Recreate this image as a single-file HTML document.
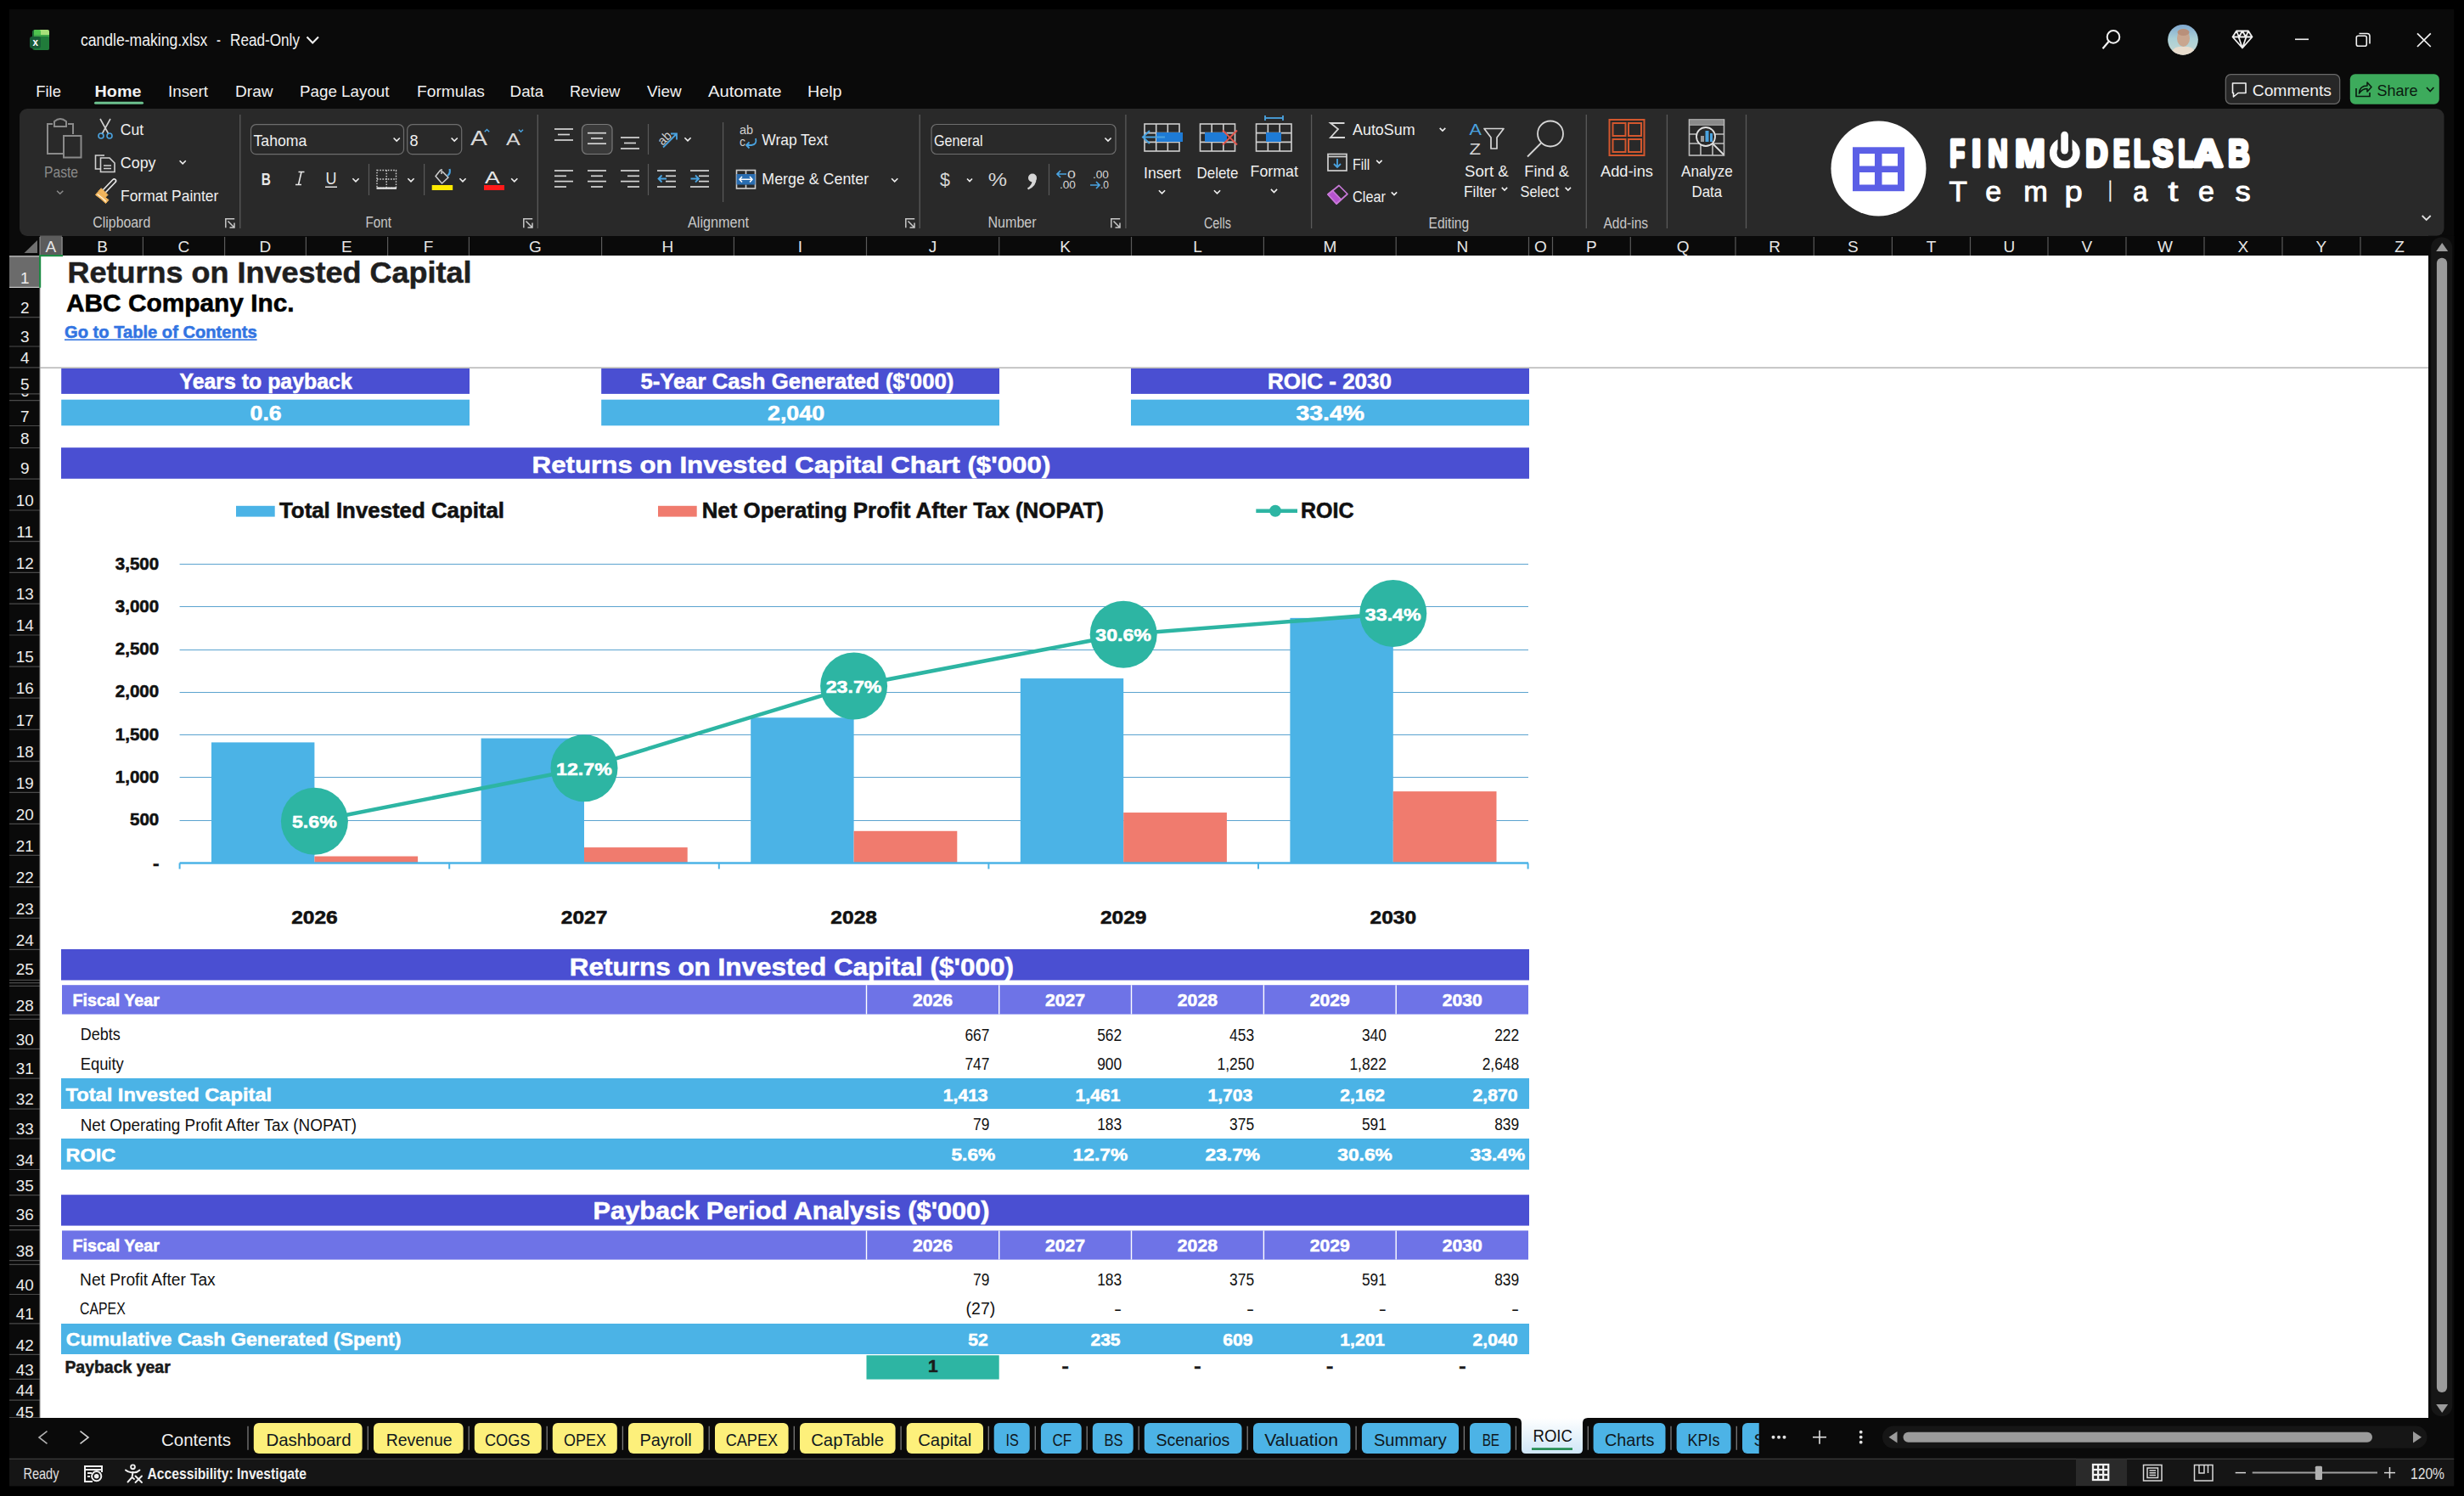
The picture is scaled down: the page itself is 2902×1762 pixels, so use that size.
<!DOCTYPE html>
<html><head><meta charset="utf-8"><title>candle-making.xlsx</title>
<style>
html,body{margin:0;padding:0;background:#000;overflow:hidden;}
svg{display:block;}
text{font-family:"Liberation Sans",sans-serif;white-space:pre;}
</style></head><body>
<svg width="2902" height="1762" viewBox="0 0 2902 1762">
<rect x="0.00" y="0.00" width="2902.00" height="1762.00" fill="#000" />
<rect x="11.00" y="11.00" width="2879.20" height="1739.30" fill="#0a0a0a" />
<rect x="38.00" y="35.00" width="20.00" height="24.00" fill="#1d6f36" rx="3" />
<rect x="40.00" y="35.00" width="18.00" height="9.00" fill="#a8e07a" rx="2" />
<rect x="40.00" y="35.00" width="8.00" height="9.00" fill="#4fc34f" rx="2" />
<rect x="40.00" y="41.00" width="18.00" height="3.00" fill="#3fa74a" />
<rect x="40.00" y="43.00" width="18.00" height="16.00" fill="#207b3a" rx="2" />
<rect x="35.00" y="43.00" width="13.00" height="14.00" fill="#185c37" rx="3" />
<text transform="translate(38.50 54.00) scale(0.8966 1)" x="0" y="0" font-size="13" font-weight="bold" fill="#fff" >x</text>
<text x="95.00" y="54.00" font-size="19.5" font-weight="normal" fill="#f2f2f2" textLength="149.35" lengthAdjust="spacingAndGlyphs" >candle-making.xlsx</text>
<text transform="translate(255.00 54.00) scale(0.7692 1)" x="0" y="0" font-size="19.5" font-weight="normal" fill="#f2f2f2" >-</text>
<text x="271.10" y="54.00" font-size="19.5" font-weight="normal" fill="#f2f2f2" textLength="81.86" lengthAdjust="spacingAndGlyphs" >Read-Only</text>
<path d="M361.5 43.5 L368.2 50.5 L375 43.5" stroke="#f2f2f2" fill="none" stroke-width="2" />
<circle cx="2489" cy="43.4" r="7.3" stroke="#f2f2f2" stroke-width="2" fill="none"/>
<line x1="2483.50" y1="49.00" x2="2476.50" y2="57.20" stroke="#f2f2f2" stroke-width="2.2" />
<defs><clipPath id="av"><circle cx="2571" cy="46.8" r="17.9"/></clipPath><linearGradient id="sky" x1="0" y1="0" x2="0" y2="1"><stop offset="0" stop-color="#7ea6cf"/><stop offset="0.45" stop-color="#a9cfd6"/><stop offset="1" stop-color="#c8d8d2"/></linearGradient></defs>
<g clip-path="url(#av)"><rect x="2552" y="28" width="38" height="38" fill="url(#sky)"/><ellipse cx="2571.5" cy="45" rx="7.5" ry="10" fill="#c9a68f"/><ellipse cx="2571.5" cy="38" rx="7" ry="4" fill="#b9907a"/><path d="M2556 66 Q2558 56 2566 55 L2577 55 Q2585 56 2587 66 Z" fill="#e8dccd"/></g>
<path d="M2634 36.5 L2648 36.5 L2652.5 43.5 L2641 56.5 L2629.5 43.5 Z M2629.5 43.5 L2652.5 43.5 M2636.5 43.5 L2641 56.5 L2645.5 43.5 M2634 36.5 L2637 43.5 L2641 36.5 L2645 43.5 L2648 36.5" stroke="#f2f2f2" fill="none" stroke-width="1.8" stroke-linejoin="round"/>
<line x1="2703.00" y1="46.30" x2="2719.00" y2="46.30" stroke="#f2f2f2" stroke-width="1.6" />
<rect x="2775.3" y="42.3" width="12" height="12" rx="2" fill="none" stroke="#f2f2f2" stroke-width="1.6"/>
<path d="M2778.5 39.5 L2788 39.5 Q2791 39.5 2791 42.5 L2791 51.5" stroke="#f2f2f2" fill="none" stroke-width="1.6" />
<line x1="2847.00" y1="39.30" x2="2862.80" y2="55.00" stroke="#f2f2f2" stroke-width="1.7" />
<line x1="2862.80" y1="39.30" x2="2847.00" y2="55.00" stroke="#f2f2f2" stroke-width="1.7" />
<rect x="2621.3" y="87.7" width="134.4" height="34.6" rx="6" fill="#272727" stroke="#6a6a6a" stroke-width="1.2"/>
<path d="M2629.5 98 L2645 98 L2645 109.5 L2636 109.5 L2630.5 114 L2630.5 109.5 L2629.5 109.5 Z" stroke="#f2f2f2" fill="none" stroke-width="1.6" stroke-linejoin="round"/>
<text x="2652.70" y="113.10" font-size="19" font-weight="normal" fill="#f2f2f2" textLength="93.31" lengthAdjust="spacingAndGlyphs" >Comments</text>
<rect x="2767.8" y="87.3" width="105" height="35.5" rx="6" fill="#3dab5c"/>
<path d="M2775 104 L2775 113.5 L2791 113.5 L2791 109" stroke="#0b1a10" fill="none" stroke-width="1.6" />
<path d="M2778.5 110 Q2779 101 2788 101 L2788 97 L2793 102.5 L2788 108 L2788 104.5 Q2782 104.5 2778.5 110 Z" stroke="#0b1a10" fill="none" stroke-width="1.5" stroke-linejoin="round"/>
<text x="2799.40" y="113.10" font-size="19" font-weight="normal" fill="#0b1a10" textLength="48.15" lengthAdjust="spacingAndGlyphs" >Share</text>
<path d="M2858 103 L2862.2 107.5 L2866.4 103" stroke="#0b1a10" fill="none" stroke-width="1.7" />
<text x="42.20" y="113.80" font-size="19" font-weight="normal" fill="#f2f2f2" textLength="29.71" lengthAdjust="spacingAndGlyphs" >File</text>
<text x="111.60" y="113.80" font-size="19" font-weight="bold" fill="#f2f2f2" textLength="54.84" lengthAdjust="spacingAndGlyphs" >Home</text>
<text x="198.00" y="113.80" font-size="19" font-weight="normal" fill="#f2f2f2" textLength="47.02" lengthAdjust="spacingAndGlyphs" >Insert</text>
<text x="277.00" y="113.80" font-size="19" font-weight="normal" fill="#f2f2f2" textLength="44.64" lengthAdjust="spacingAndGlyphs" >Draw</text>
<text x="353.00" y="113.80" font-size="19" font-weight="normal" fill="#f2f2f2" textLength="105.54" lengthAdjust="spacingAndGlyphs" >Page Layout</text>
<text x="491.00" y="113.80" font-size="19" font-weight="normal" fill="#f2f2f2" textLength="79.93" lengthAdjust="spacingAndGlyphs" >Formulas</text>
<text x="600.60" y="113.80" font-size="19" font-weight="normal" fill="#f2f2f2" textLength="39.68" lengthAdjust="spacingAndGlyphs" >Data</text>
<text x="670.90" y="113.80" font-size="19" font-weight="normal" fill="#f2f2f2" textLength="59.41" lengthAdjust="spacingAndGlyphs" >Review</text>
<text x="762.00" y="113.80" font-size="19" font-weight="normal" fill="#f2f2f2" textLength="40.64" lengthAdjust="spacingAndGlyphs" >View</text>
<text x="834.00" y="113.80" font-size="19" font-weight="normal" fill="#f2f2f2" textLength="86.57" lengthAdjust="spacingAndGlyphs" >Automate</text>
<text x="951.00" y="113.80" font-size="19" font-weight="normal" fill="#f2f2f2" textLength="40.58" lengthAdjust="spacingAndGlyphs" >Help</text>
<rect x="111.00" y="119.80" width="58.00" height="3.00" fill="#6cc18e" rx="1.5" />
<rect x="23.00" y="128.00" width="2855.50" height="150.00" fill="#292929" rx="9" />
<line x1="282.80" y1="135.00" x2="282.80" y2="269.00" stroke="#5a5a5a" stroke-width="1.3" />
<line x1="633.30" y1="135.00" x2="633.30" y2="269.00" stroke="#5a5a5a" stroke-width="1.3" />
<line x1="1083.20" y1="135.00" x2="1083.20" y2="269.00" stroke="#5a5a5a" stroke-width="1.3" />
<line x1="1325.90" y1="135.00" x2="1325.90" y2="269.00" stroke="#5a5a5a" stroke-width="1.3" />
<line x1="1544.60" y1="135.00" x2="1544.60" y2="269.00" stroke="#5a5a5a" stroke-width="1.3" />
<line x1="1868.30" y1="135.00" x2="1868.30" y2="269.00" stroke="#5a5a5a" stroke-width="1.3" />
<line x1="1963.40" y1="135.00" x2="1963.40" y2="269.00" stroke="#5a5a5a" stroke-width="1.3" />
<line x1="2056.50" y1="135.00" x2="2056.50" y2="269.00" stroke="#5a5a5a" stroke-width="1.3" />
<g fill="none" stroke="#8a8a8a" stroke-width="2"><path d="M62 146 L56 146 L56 181 L74 181"/><path d="M80 146 L86 146 L86 158"/><path d="M64 149 L64 143 Q71 137 78 143 L78 149 Z"/><rect x="75" y="160" width="20.5" height="25.5"/></g>
<text x="52.00" y="209.30" font-size="19" font-weight="normal" fill="#8a8a8a" textLength="40.07" lengthAdjust="spacingAndGlyphs" >Paste</text>
<path d="M67.10000000000001 224.7 L70.7 228.3 L74.3 224.7" stroke="#8a8a8a" fill="none" stroke-width="1.5" />
<g fill="none" stroke-width="1.6"><path d="M118 140 L128 158 M130 140 L120 158" stroke="#d0d0d0"/><circle cx="119" cy="160" r="3" stroke="#4aa3e0"/><circle cx="129" cy="160" r="3" stroke="#4aa3e0"/></g>
<text x="141.80" y="158.60" font-size="19" font-weight="normal" fill="#f0f0f0" textLength="27.36" lengthAdjust="spacingAndGlyphs" >Cut</text>
<g fill="none" stroke="#d0d0d0" stroke-width="1.6"><path d="M119 183 L112.5 183 L112.5 199 L118 199"/><path d="M119 183 L123 183"/><path d="M118.5 186 L129 186 L135 192 L135 202.5 L118.5 202.5 Z"/><path d="M122 195 L131 195 M122 198.5 L131 198.5"/></g>
<text x="141.80" y="198.10" font-size="19" font-weight="normal" fill="#f0f0f0" textLength="41.70" lengthAdjust="spacingAndGlyphs" >Copy</text>
<path d="M211.6 189.2 L215.2 192.8 L218.79999999999998 189.2" stroke="#f0f0f0" fill="none" stroke-width="1.6" />
<g stroke-linejoin="round" stroke-linecap="round"><path d="M124.5 226.5 L135.5 215 Q137.5 213 136 211.5 Q134.5 210 132.5 212 L121.5 223.5" fill="none" stroke="#e6e6e6" stroke-width="1.7"/><path d="M119.5 222 L127 229.5 L124 232.5 L116.5 225 Z" fill="#f3b65c" stroke="#f3b65c" stroke-width="1"/><path d="M116.5 225 Q113.5 228 112.5 229.5 Q119 234 124.5 239.5 Q126 238 128 235.5 L124 232.5 Z" fill="#f3b65c" stroke="#f3b65c" stroke-width="1"/><path d="M115 229 Q120 232.5 124.5 237" fill="none" stroke="#fff3dc" stroke-width="1.3"/></g>
<text x="142.00" y="237.30" font-size="19" font-weight="normal" fill="#f0f0f0" textLength="115.31" lengthAdjust="spacingAndGlyphs" >Format Painter</text>
<text x="109.30" y="267.70" font-size="17.5" font-weight="normal" fill="#c8c8c8" textLength="67.92" lengthAdjust="spacingAndGlyphs" >Clipboard</text>
<path d="M265 257 L265 269 L277 269 M265 257 L277 257 L277 269" stroke="#c8c8c8" fill="none" stroke-width="0" />
<path d="M265.8 268.2 L265.8 257.8 L276.2 257.8" stroke="#c8c8c8" stroke-width="1.5" fill="none"/>
<path d="M268.5 260.5 L276 268 M270.5 268 L276 268 L276 262.5" stroke="#c8c8c8" stroke-width="1.5" fill="none"/>
<rect x="295.5" y="146.7" width="180" height="35" rx="6" fill="#292929" stroke="#6e6e6e" stroke-width="1.2"/>
<text x="298.50" y="171.50" font-size="19" font-weight="normal" fill="#f0f0f0" textLength="62.85" lengthAdjust="spacingAndGlyphs" >Tahoma</text>
<path d="M463.59999999999997 162.5 L467.2 166.10000000000002 L470.8 162.5" stroke="#f0f0f0" fill="none" stroke-width="1.6" />
<rect x="479.7" y="146.7" width="64" height="35" rx="6" fill="#292929" stroke="#6e6e6e" stroke-width="1.2"/>
<text transform="translate(482.50 171.50) scale(0.9524 1)" x="0" y="0" font-size="19" font-weight="normal" fill="#f0f0f0" >8</text>
<path d="M531.6 162.5 L535.2 166.10000000000002 L538.8000000000001 162.5" stroke="#f0f0f0" fill="none" stroke-width="1.6" />
<text transform="translate(554.00 171.00) scale(1.2500 1)" x="0" y="0" font-size="24" font-weight="normal" fill="#d8d8d8" >A</text>
<path d="M570.8 155.2 L573.5 152.5 L576.2 155.2" stroke="#4aa3e0" fill="none" stroke-width="1.5" />
<text transform="translate(596.00 171.00) scale(1.2593 1)" x="0" y="0" font-size="20" font-weight="normal" fill="#d8d8d8" >A</text>
<path d="M611.0 152.75 L613.5 155.25 L616.0 152.75" stroke="#4aa3e0" fill="none" stroke-width="1.5" />
<text transform="translate(307.80 217.80) scale(0.7724 1)" x="0" y="0" font-size="20" font-weight="bold" fill="#e6e6e6" >B</text>
<path d="M348 217.5 L355 217.5 M351.5 202.5 L358.5 202.5 M355 202.5 L351.5 217.5" stroke="#e6e6e6" fill="none" stroke-width="1.6" />
<text transform="translate(383.50 216.50) scale(0.8966 1)" x="0" y="0" font-size="20" font-weight="normal" fill="#e6e6e6" >U</text>
<rect x="383.00" y="219.50" width="14.00" height="1.50" fill="#e6e6e6" />
<path d="M415.4 210.2 L419 213.8 L422.6 210.2" stroke="#f0f0f0" fill="none" stroke-width="1.6" />
<line x1="434.50" y1="193.00" x2="434.50" y2="230.00" stroke="#5a5a5a" stroke-width="1.2" />
<g fill="none" stroke="#d0d0d0" stroke-width="1.4" stroke-dasharray="1.6 1.6"><rect x="444" y="200.5" width="22.5" height="21"/><path d="M455.2 200.5 L455.2 221.5 M444 211 L466.5 211"/></g>
<rect x="443.50" y="220.50" width="23.50" height="2.30" fill="#e6e6e6" />
<path d="M480.4 210.2 L484 213.8 L487.6 210.2" stroke="#f0f0f0" fill="none" stroke-width="1.6" />
<line x1="499.60" y1="193.00" x2="499.60" y2="230.00" stroke="#5a5a5a" stroke-width="1.2" />
<g fill="none" stroke="#d0d0d0" stroke-width="1.5" stroke-linejoin="round"><path d="M519 200 L513 207.5 L520.5 216 L528 209 L521 202"/><path d="M520 199 L520 205"/></g>
<path d="M527 207 Q531 204 529.5 199" stroke="#4aa3e0" fill="none" stroke-width="2.2" />
<rect x="508.70" y="218.00" width="24.50" height="6.00" fill="#ffea00" />
<path d="M541.4 210.2 L545 213.8 L548.6 210.2" stroke="#f0f0f0" fill="none" stroke-width="1.6" />
<text transform="translate(571.00 216.00) scale(1.3333 1)" x="0" y="0" font-size="20" font-weight="normal" fill="#e6e6e6" >A</text>
<rect x="570.00" y="218.00" width="24.00" height="6.00" fill="#ff1a1a" />
<path d="M602.1999999999999 210.2 L605.8 213.8 L609.4 210.2" stroke="#f0f0f0" fill="none" stroke-width="1.6" />
<text x="430.50" y="267.50" font-size="17.5" font-weight="normal" fill="#c8c8c8" textLength="30.52" lengthAdjust="spacingAndGlyphs" >Font</text>
<path d="M616 257 L616 269 L628 269 M616 257 L628 257 L628 269" stroke="#c8c8c8" fill="none" stroke-width="0" />
<path d="M616.8 268.2 L616.8 257.8 L627.2 257.8" stroke="#c8c8c8" stroke-width="1.5" fill="none"/>
<path d="M619.5 260.5 L627 268 M621.5 268 L627 268 L627 262.5" stroke="#c8c8c8" stroke-width="1.5" fill="none"/>
<line x1="653.00" y1="152.00" x2="675.00" y2="152.00" stroke="#d6d6d6" stroke-width="1.7" />
<line x1="657.00" y1="158.50" x2="671.00" y2="158.50" stroke="#d6d6d6" stroke-width="1.7" />
<line x1="653.00" y1="165.00" x2="675.00" y2="165.00" stroke="#d6d6d6" stroke-width="1.7" />
<rect x="685.5" y="146.5" width="35.5" height="35" rx="6" fill="#3a3a3a" stroke="#7a7a7a" stroke-width="1.2"/>
<line x1="692.00" y1="156.70" x2="714.00" y2="156.70" stroke="#d6d6d6" stroke-width="1.7" />
<line x1="696.00" y1="162.90" x2="710.00" y2="162.90" stroke="#d6d6d6" stroke-width="1.7" />
<line x1="692.00" y1="169.20" x2="714.00" y2="169.20" stroke="#d6d6d6" stroke-width="1.7" />
<line x1="731.00" y1="162.00" x2="753.00" y2="162.00" stroke="#d6d6d6" stroke-width="1.7" />
<line x1="735.00" y1="168.50" x2="749.00" y2="168.50" stroke="#d6d6d6" stroke-width="1.7" />
<line x1="731.00" y1="175.00" x2="753.00" y2="175.00" stroke="#d6d6d6" stroke-width="1.7" />
<line x1="763.50" y1="146.00" x2="763.50" y2="182.00" stroke="#5a5a5a" stroke-width="1.2" />
<line x1="851.60" y1="144.00" x2="851.60" y2="238.00" stroke="#5a5a5a" stroke-width="1.2" />
<text x="774.00" y="168.00" font-size="15" font-weight="normal" fill="#d0d0d0" textLength="15.94" lengthAdjust="spacingAndGlyphs" transform="rotate(-45 782 162)">ab</text>
<path d="M781 173.5 L797 157.5 M790 157.5 L797 157.5 L797 164.5" stroke="#4aa3e0" fill="none" stroke-width="1.8" />
<path d="M806.4 162.2 L810 165.8 L813.6 162.2" stroke="#f0f0f0" fill="none" stroke-width="1.6" />
<line x1="653.00" y1="201.00" x2="675.00" y2="201.00" stroke="#d6d6d6" stroke-width="1.7" />
<line x1="653.00" y1="207.30" x2="667.00" y2="207.30" stroke="#d6d6d6" stroke-width="1.7" />
<line x1="653.00" y1="213.60" x2="675.00" y2="213.60" stroke="#d6d6d6" stroke-width="1.7" />
<line x1="653.00" y1="220.00" x2="667.00" y2="220.00" stroke="#d6d6d6" stroke-width="1.7" />
<line x1="692.00" y1="201.00" x2="714.00" y2="201.00" stroke="#d6d6d6" stroke-width="1.7" />
<line x1="696.00" y1="207.30" x2="710.00" y2="207.30" stroke="#d6d6d6" stroke-width="1.7" />
<line x1="692.00" y1="213.60" x2="714.00" y2="213.60" stroke="#d6d6d6" stroke-width="1.7" />
<line x1="696.00" y1="220.00" x2="710.00" y2="220.00" stroke="#d6d6d6" stroke-width="1.7" />
<line x1="731.00" y1="201.00" x2="753.00" y2="201.00" stroke="#d6d6d6" stroke-width="1.7" />
<line x1="739.00" y1="207.30" x2="753.00" y2="207.30" stroke="#d6d6d6" stroke-width="1.7" />
<line x1="731.00" y1="213.60" x2="753.00" y2="213.60" stroke="#d6d6d6" stroke-width="1.7" />
<line x1="739.00" y1="220.00" x2="753.00" y2="220.00" stroke="#d6d6d6" stroke-width="1.7" />
<line x1="763.50" y1="193.00" x2="763.50" y2="230.00" stroke="#5a5a5a" stroke-width="1.2" />
<line x1="774.00" y1="201.00" x2="796.00" y2="201.00" stroke="#d6d6d6" stroke-width="1.7" />
<line x1="774.00" y1="220.00" x2="796.00" y2="220.00" stroke="#d6d6d6" stroke-width="1.7" />
<line x1="784.00" y1="207.30" x2="796.00" y2="207.30" stroke="#d6d6d6" stroke-width="1.7" />
<line x1="784.00" y1="213.60" x2="796.00" y2="213.60" stroke="#d6d6d6" stroke-width="1.7" />
<path d="M785 210.5 L775.5 210.5 M779.5 206.5 L775.5 210.5 L779.5 214.5" stroke="#4aa3e0" fill="none" stroke-width="1.8" />
<line x1="813.00" y1="201.00" x2="835.00" y2="201.00" stroke="#d6d6d6" stroke-width="1.7" />
<line x1="813.00" y1="220.00" x2="835.00" y2="220.00" stroke="#d6d6d6" stroke-width="1.7" />
<line x1="823.00" y1="207.30" x2="835.00" y2="207.30" stroke="#d6d6d6" stroke-width="1.7" />
<line x1="823.00" y1="213.60" x2="835.00" y2="213.60" stroke="#d6d6d6" stroke-width="1.7" />
<path d="M813.5 210.5 L823 210.5 M819 206.5 L823 210.5 L819 214.5" stroke="#4aa3e0" fill="none" stroke-width="1.8" />
<text x="871.00" y="158.00" font-size="14" font-weight="normal" fill="#d0d0d0" textLength="16.07" lengthAdjust="spacingAndGlyphs" >ab</text>
<text transform="translate(871.00 172.00) scale(1.0000 1)" x="0" y="0" font-size="14" font-weight="normal" fill="#d0d0d0" >c</text>
<path d="M890 163 Q892 170 885 171 L879 171 M882.5 167.5 L879 171 L882.5 174.5" stroke="#4aa3e0" fill="none" stroke-width="1.8" />
<text x="897.30" y="170.70" font-size="19" font-weight="normal" fill="#f0f0f0" textLength="77.77" lengthAdjust="spacingAndGlyphs" >Wrap Text</text>
<g fill="none" stroke="#d0d0d0" stroke-width="1.6"><rect x="867.5" y="200.5" width="22" height="21.5"/><path d="M878.5 200.5 L878.5 205 M878.5 217.5 L878.5 222"/></g>
<rect x="867.50" y="205.00" width="22.00" height="12.50" fill="#2a6db0" />
<path d="M871 211.2 L886 211.2 M874 208 L871 211.2 L874 214.4 M883 208 L886 211.2 L883 214.4" stroke="#fff" fill="none" stroke-width="1.5" />
<text x="897.30" y="217.00" font-size="19" font-weight="normal" fill="#f0f0f0" textLength="125.80" lengthAdjust="spacingAndGlyphs" >Merge &amp; Center</text>
<path d="M1050.1000000000001 210.2 L1053.7 213.8 L1057.3 210.2" stroke="#f0f0f0" fill="none" stroke-width="1.6" />
<text x="810.00" y="267.80" font-size="17.5" font-weight="normal" fill="#c8c8c8" textLength="72.07" lengthAdjust="spacingAndGlyphs" >Alignment</text>
<path d="M1066 257 L1066 269 L1078 269 M1066 257 L1078 257 L1078 269" stroke="#c8c8c8" fill="none" stroke-width="0" />
<path d="M1066.8 268.2 L1066.8 257.8 L1077.2 257.8" stroke="#c8c8c8" stroke-width="1.5" fill="none"/>
<path d="M1069.5 260.5 L1077 268 M1071.5 268 L1077 268 L1077 262.5" stroke="#c8c8c8" stroke-width="1.5" fill="none"/>
<rect x="1097" y="146.5" width="217" height="35" rx="6" fill="#292929" stroke="#6e6e6e" stroke-width="1.2"/>
<text x="1100.00" y="171.50" font-size="19" font-weight="normal" fill="#f0f0f0" textLength="57.58" lengthAdjust="spacingAndGlyphs" >General</text>
<path d="M1301.4 162.5 L1305 166.10000000000002 L1308.6 162.5" stroke="#f0f0f0" fill="none" stroke-width="1.6" />
<text transform="translate(1107.00 219.00) scale(0.9796 1)" x="0" y="0" font-size="22" font-weight="normal" fill="#d6d6d6" >$</text>
<path d="M1139 210.5 L1142 213.5 L1145 210.5" stroke="#f0f0f0" fill="none" stroke-width="1.6" />
<text transform="translate(1163.80 219.00) scale(1.1385 1)" x="0" y="0" font-size="22" font-weight="normal" fill="#d6d6d6" >%</text>
<circle cx="1216" cy="209.5" r="5" fill="#d6d6d6"/>
<path d="M1220.5 210 Q1221 219 1211 223.5 L1210 221.5 Q1216 218 1215.5 212 Z" stroke="none" fill="#d6d6d6" stroke-width="1" />
<line x1="1235.50" y1="193.00" x2="1235.50" y2="230.00" stroke="#5a5a5a" stroke-width="1.2" />
<text transform="translate(1257.00 210.00) scale(1.4815 1)" x="0" y="0" font-size="12" font-weight="normal" fill="#d6d6d6" >0</text>
<text x="1248.00" y="222.00" font-size="12" font-weight="normal" fill="#d6d6d6" textLength="18.93" lengthAdjust="spacingAndGlyphs" >.00</text>
<path d="M1256 205 L1245 205 M1249 201 L1245 205 L1249 209" stroke="#4aa3e0" fill="none" stroke-width="1.7" />
<text x="1287.00" y="210.00" font-size="12" font-weight="normal" fill="#d6d6d6" textLength="18.93" lengthAdjust="spacingAndGlyphs" >.00</text>
<text x="1296.00" y="222.00" font-size="12" font-weight="normal" fill="#d6d6d6" textLength="10.01" lengthAdjust="spacingAndGlyphs" >.0</text>
<path d="M1284 218 L1295 218 M1291 214 L1295 218 L1291 222" stroke="#4aa3e0" fill="none" stroke-width="1.7" />
<text x="1163.40" y="268.00" font-size="17.5" font-weight="normal" fill="#c8c8c8" textLength="57.30" lengthAdjust="spacingAndGlyphs" >Number</text>
<path d="M1308 257 L1308 269 L1320 269 M1308 257 L1320 257 L1320 269" stroke="#c8c8c8" fill="none" stroke-width="0" />
<path d="M1308.8 268.2 L1308.8 257.8 L1319.2 257.8" stroke="#c8c8c8" stroke-width="1.5" fill="none"/>
<path d="M1311.5 260.5 L1319 268 M1313.5 268 L1319 268 L1319 262.5" stroke="#c8c8c8" stroke-width="1.5" fill="none"/>
<rect x="1348" y="146" width="41" height="32" fill="none" stroke="#cfcfcf" stroke-width="1.6"/>
<line x1="1361.67" y1="146.00" x2="1361.67" y2="178.00" stroke="#cfcfcf" stroke-width="1.6" />
<line x1="1375.33" y1="146.00" x2="1375.33" y2="178.00" stroke="#cfcfcf" stroke-width="1.6" />
<line x1="1348.00" y1="156.67" x2="1389.00" y2="156.67" stroke="#cfcfcf" stroke-width="1.6" />
<line x1="1348.00" y1="167.33" x2="1389.00" y2="167.33" stroke="#cfcfcf" stroke-width="1.6" />
<rect x="1362.00" y="156.00" width="31.00" height="11.00" fill="#1e7bd6" />
<path d="M1372 161.5 L1346 161.5 M1354 154 L1346 161.5 L1354 169" stroke="#4aa3e0" fill="none" stroke-width="2" />
<text x="1347.00" y="210.30" font-size="19" font-weight="normal" fill="#f0f0f0" textLength="44.01" lengthAdjust="spacingAndGlyphs" >Insert</text>
<path d="M1364.9 224.2 L1368.5 227.8 L1372.1 224.2" stroke="#f0f0f0" fill="none" stroke-width="1.6" />
<rect x="1413.5" y="146" width="41.0" height="32" fill="none" stroke="#cfcfcf" stroke-width="1.6"/>
<line x1="1427.17" y1="146.00" x2="1427.17" y2="178.00" stroke="#cfcfcf" stroke-width="1.6" />
<line x1="1440.83" y1="146.00" x2="1440.83" y2="178.00" stroke="#cfcfcf" stroke-width="1.6" />
<line x1="1413.50" y1="156.67" x2="1454.50" y2="156.67" stroke="#cfcfcf" stroke-width="1.6" />
<line x1="1413.50" y1="167.33" x2="1454.50" y2="167.33" stroke="#cfcfcf" stroke-width="1.6" />
<rect x="1419.00" y="156.00" width="26.00" height="11.00" fill="#1e7bd6" />
<line x1="1440.00" y1="153.50" x2="1457.00" y2="170.50" stroke="#e0564c" stroke-width="2" />
<line x1="1457.00" y1="153.50" x2="1440.00" y2="170.50" stroke="#e0564c" stroke-width="2" />
<text x="1409.50" y="210.30" font-size="19" font-weight="normal" fill="#f0f0f0" textLength="48.93" lengthAdjust="spacingAndGlyphs" >Delete</text>
<path d="M1429.9 224.2 L1433.5 227.8 L1437.1 224.2" stroke="#f0f0f0" fill="none" stroke-width="1.6" />
<rect x="1479.5" y="146" width="41.5" height="32" fill="none" stroke="#cfcfcf" stroke-width="1.6"/>
<line x1="1493.33" y1="146.00" x2="1493.33" y2="178.00" stroke="#cfcfcf" stroke-width="1.6" />
<line x1="1507.17" y1="146.00" x2="1507.17" y2="178.00" stroke="#cfcfcf" stroke-width="1.6" />
<line x1="1479.50" y1="156.67" x2="1521.00" y2="156.67" stroke="#cfcfcf" stroke-width="1.6" />
<line x1="1479.50" y1="167.33" x2="1521.00" y2="167.33" stroke="#cfcfcf" stroke-width="1.6" />
<rect x="1491.00" y="156.00" width="18.00" height="11.00" fill="#1e7bd6" />
<line x1="1490.00" y1="139.00" x2="1511.00" y2="139.00" stroke="#4aa3e0" stroke-width="1.8" />
<line x1="1490.00" y1="136.00" x2="1490.00" y2="142.00" stroke="#4aa3e0" stroke-width="1.8" />
<line x1="1511.00" y1="136.00" x2="1511.00" y2="142.00" stroke="#4aa3e0" stroke-width="1.8" />
<text x="1472.60" y="207.80" font-size="19" font-weight="normal" fill="#f0f0f0" textLength="56.33" lengthAdjust="spacingAndGlyphs" >Format</text>
<path d="M1496.9 222.89999999999998 L1500.5 226.5 L1504.1 222.89999999999998" stroke="#f0f0f0" fill="none" stroke-width="1.6" />
<text x="1418.00" y="268.50" font-size="17.5" font-weight="normal" fill="#c8c8c8" textLength="31.91" lengthAdjust="spacingAndGlyphs" >Cells</text>
<path d="M1583.5 145 L1567 145 L1576 152 L1567 162 L1584 162" stroke="#d6d6d6" fill="none" stroke-width="1.8" />
<text x="1593.00" y="159.00" font-size="19" font-weight="normal" fill="#f0f0f0" textLength="73.60" lengthAdjust="spacingAndGlyphs" >AutoSum</text>
<path d="M1695.7 150.85 L1699 154.15 L1702.3 150.85" stroke="#f0f0f0" fill="none" stroke-width="1.6" />
<rect x="1564" y="181.5" width="22" height="19.5" fill="none" stroke="#cfcfcf" stroke-width="1.7"/>
<line x1="1564.00" y1="184.50" x2="1586.00" y2="184.50" stroke="#cfcfcf" stroke-width="1.7" />
<path d="M1575 187 L1575 197 M1571 193 L1575 197 L1579 193" stroke="#4aa3e0" fill="none" stroke-width="1.8" />
<text x="1593.00" y="199.70" font-size="19" font-weight="normal" fill="#f0f0f0" textLength="20.42" lengthAdjust="spacingAndGlyphs" >Fill</text>
<path d="M1621.2 188.9 L1624.4 192.1 L1627.6000000000001 188.9" stroke="#f0f0f0" fill="none" stroke-width="1.6" />
<g stroke-width="1.7" stroke-linejoin="round"><path d="M1564 229 L1577 218.5 L1587 228.5 L1574 240 Z" fill="none" stroke="#c879d8"/><path d="M1564 229 L1569.5 224.5 L1579.5 235 L1574 240 Z" fill="#b553cf" stroke="#c879d8"/></g>
<text x="1593.00" y="237.80" font-size="19" font-weight="normal" fill="#f0f0f0" textLength="38.92" lengthAdjust="spacingAndGlyphs" >Clear</text>
<path d="M1638.8 226.4 L1642 229.6 L1645.2 226.4" stroke="#f0f0f0" fill="none" stroke-width="1.6" />
<text transform="translate(1730.50 159.00) scale(1.1373 1)" x="0" y="0" font-size="19" font-weight="normal" fill="#4aa3e0" >A</text>
<text transform="translate(1730.50 181.50) scale(1.1739 1)" x="0" y="0" font-size="19" font-weight="normal" fill="#d6d6d6" >Z</text>
<path d="M1748 151.5 L1771 151.5 L1763 162 L1763 175 L1756 175 L1756 162 Z" stroke="#d6d6d6" fill="none" stroke-width="1.7" stroke-linejoin="round"/>
<text x="1725.00" y="207.80" font-size="19" font-weight="normal" fill="#f0f0f0" textLength="51.74" lengthAdjust="spacingAndGlyphs" >Sort &amp;</text>
<text x="1724.00" y="231.50" font-size="19" font-weight="normal" fill="#f0f0f0" textLength="38.38" lengthAdjust="spacingAndGlyphs" >Filter</text>
<path d="M1768.8 220.9 L1772 224.1 L1775.2 220.9" stroke="#f0f0f0" fill="none" stroke-width="1.6" />
<circle cx="1826" cy="157.5" r="15" fill="none" stroke="#d6d6d6" stroke-width="1.8"/>
<line x1="1815.00" y1="168.50" x2="1799.00" y2="184.50" stroke="#d6d6d6" stroke-width="1.8" />
<text x="1795.30" y="207.80" font-size="19" font-weight="normal" fill="#f0f0f0" textLength="52.61" lengthAdjust="spacingAndGlyphs" >Find &amp;</text>
<text x="1790.50" y="231.50" font-size="19" font-weight="normal" fill="#f0f0f0" textLength="45.55" lengthAdjust="spacingAndGlyphs" >Select</text>
<path d="M1843.6 220.9 L1846.8 224.1 L1850.0 220.9" stroke="#f0f0f0" fill="none" stroke-width="1.6" />
<text x="1682.50" y="268.50" font-size="17.5" font-weight="normal" fill="#c8c8c8" textLength="47.71" lengthAdjust="spacingAndGlyphs" >Editing</text>
<g fill="none" stroke="#d2572e" stroke-width="2"><rect x="1895.5" y="141" width="41" height="42"/><rect x="1899.5" y="145" width="15" height="15"/><rect x="1918" y="145" width="15" height="15"/><rect x="1899.5" y="164" width="15" height="15"/><rect x="1918" y="164" width="15" height="15"/></g>
<text x="1885.00" y="207.80" font-size="19" font-weight="normal" fill="#f0f0f0" textLength="61.92" lengthAdjust="spacingAndGlyphs" >Add-ins</text>
<text x="1888.50" y="268.50" font-size="17.5" font-weight="normal" fill="#c8c8c8" textLength="52.58" lengthAdjust="spacingAndGlyphs" >Add-ins</text>
<g fill="none" stroke="#bdbdbd" stroke-width="1.6"><rect x="1989.5" y="141" width="41" height="42"/><path d="M1989.5 147 L2030.5 147 M1989.5 158 L2030.5 158 M1989.5 169 L2030.5 169 M2003 169 L2003 183 M2017 169 L2017 183"/></g>
<rect x="1990.00" y="141.50" width="40.00" height="5.00" fill="#8a8a8a" />
<circle cx="2009" cy="161" r="11" fill="#292929" stroke="#e0e0e0" stroke-width="1.8"/>
<line x1="2017.00" y1="169.00" x2="2030.00" y2="182.00" stroke="#e0e0e0" stroke-width="1.8" />
<rect x="2003.00" y="160.00" width="4.00" height="7.00" fill="#9a9a9a" />
<rect x="2008.50" y="154.00" width="4.00" height="13.00" fill="#4aa3e0" />
<rect x="2014.00" y="157.00" width="3.00" height="10.00" fill="#4aa3e0" />
<text x="1980.00" y="207.80" font-size="19" font-weight="normal" fill="#f0f0f0" textLength="60.88" lengthAdjust="spacingAndGlyphs" >Analyze</text>
<text x="1992.50" y="232.00" font-size="19" font-weight="normal" fill="#f0f0f0" textLength="35.70" lengthAdjust="spacingAndGlyphs" >Data</text>
<circle cx="2212.5" cy="198.5" r="56" fill="#ffffff"/>
<rect x="2182.00" y="173.30" width="61.00" height="51.90" fill="#5b5fe6" />
<rect x="2190.00" y="181.00" width="18.00" height="14.50" fill="#fff" />
<rect x="2216.50" y="181.00" width="18.50" height="14.50" fill="#fff" />
<rect x="2190.00" y="203.00" width="18.00" height="14.50" fill="#fff" />
<rect x="2216.50" y="203.00" width="18.50" height="14.50" fill="#fff" />
<text transform="translate(2296.60 195.80) scale(0.6566 1)" x="0" y="0" font-size="43.5" font-weight="bold" fill="#ffffff" stroke="#ffffff" stroke-width="4.5" stroke-linejoin="round">F</text>
<text transform="translate(2322.40 195.80) scale(0.8583 1)" x="0" y="0" font-size="43.5" font-weight="bold" fill="#ffffff" stroke="#ffffff" stroke-width="4.5" stroke-linejoin="round">I</text>
<text transform="translate(2341.60 195.80) scale(0.7333 1)" x="0" y="0" font-size="43.5" font-weight="bold" fill="#ffffff" stroke="#ffffff" stroke-width="4.5" stroke-linejoin="round">N</text>
<text transform="translate(2373.40 195.80) scale(0.9600 1)" x="0" y="0" font-size="43.5" font-weight="bold" fill="#ffffff" stroke="#ffffff" stroke-width="4.5" stroke-linejoin="round">M</text>
<text transform="translate(2456.60 195.80) scale(0.8254 1)" x="0" y="0" font-size="43.5" font-weight="bold" fill="#ffffff" stroke="#ffffff" stroke-width="4.5" stroke-linejoin="round">D</text>
<text transform="translate(2488.90 195.80) scale(0.6552 1)" x="0" y="0" font-size="43.5" font-weight="bold" fill="#ffffff" stroke="#ffffff" stroke-width="4.5" stroke-linejoin="round">E</text>
<text transform="translate(2513.00 195.80) scale(0.6943 1)" x="0" y="0" font-size="43.5" font-weight="bold" fill="#ffffff" stroke="#ffffff" stroke-width="4.5" stroke-linejoin="round">L</text>
<text transform="translate(2535.60 195.80) scale(0.8207 1)" x="0" y="0" font-size="43.5" font-weight="bold" fill="#ffffff" stroke="#ffffff" stroke-width="4.5" stroke-linejoin="round">S</text>
<text transform="translate(2565.60 195.80) scale(0.6604 1)" x="0" y="0" font-size="43.5" font-weight="bold" fill="#ffffff" stroke="#ffffff" stroke-width="4.5" stroke-linejoin="round">L</text>
<text transform="translate(2583.10 195.80) scale(1.1048 1)" x="0" y="0" font-size="43.5" font-weight="bold" fill="#ffffff" stroke="#ffffff" stroke-width="4.5" stroke-linejoin="round">A</text>
<text transform="translate(2624.30 195.80) scale(0.8032 1)" x="0" y="0" font-size="43.5" font-weight="bold" fill="#ffffff" stroke="#ffffff" stroke-width="4.5" stroke-linejoin="round">B</text>
<circle cx="2431.8" cy="180.2" r="13.6" fill="none" stroke="#ffffff" stroke-width="8.6"/>
<rect x="2423.50" y="155.00" width="17.00" height="21.00" fill="#292929" />
<rect x="2427.30" y="154.80" width="8.60" height="26.60" fill="#ffffff" rx="4.3" />
<text transform="translate(2295.40 237.20) scale(1.0313 1)" x="0" y="0" font-size="34" font-weight="normal" fill="#ffffff" stroke="#ffffff" stroke-width="0.9">T</text>
<text transform="translate(2338.20 237.20) scale(1.0000 1)" x="0" y="0" font-size="34" font-weight="normal" fill="#ffffff" stroke="#ffffff" stroke-width="0.9">e</text>
<text transform="translate(2383.30 237.20) scale(1.0088 1)" x="0" y="0" font-size="34" font-weight="normal" fill="#ffffff" stroke="#ffffff" stroke-width="0.9">m</text>
<text transform="translate(2431.60 237.20) scale(1.1211 1)" x="0" y="0" font-size="34" font-weight="normal" fill="#ffffff" stroke="#ffffff" stroke-width="0.9">p</text>
<text transform="translate(2483.80 237.20) scale(0.4133 1)" x="0" y="0" font-size="34" font-weight="normal" fill="#ffffff" stroke="#ffffff" stroke-width="0.9">l</text>
<text transform="translate(2512.30 237.20) scale(0.9105 1)" x="0" y="0" font-size="34" font-weight="normal" fill="#ffffff" stroke="#ffffff" stroke-width="0.9">a</text>
<text transform="translate(2553.40 237.20) scale(1.2526 1)" x="0" y="0" font-size="34" font-weight="normal" fill="#ffffff" stroke="#ffffff" stroke-width="0.9">t</text>
<text transform="translate(2589.00 237.20) scale(1.0000 1)" x="0" y="0" font-size="34" font-weight="normal" fill="#ffffff" stroke="#ffffff" stroke-width="0.9">e</text>
<text transform="translate(2632.60 237.20) scale(1.0706 1)" x="0" y="0" font-size="34" font-weight="normal" fill="#ffffff" stroke="#ffffff" stroke-width="0.9">s</text>
<path d="M2852.7 254.0 L2857.7 259.0 L2862.7 254.0" stroke="#e0e0e0" fill="none" stroke-width="1.8" />
<rect x="11.00" y="278.00" width="2879.20" height="23.00" fill="#0a0a0a" />
<rect x="47.00" y="277.50" width="26.00" height="23.50" fill="#5c5c5c" />
<line x1="73.00" y1="279.00" x2="73.00" y2="301.00" stroke="#5a5a5a" stroke-width="1.2" />
<text transform="translate(53.62 296.70) scale(1.0000 1)" x="0" y="0" font-size="19" font-weight="normal" fill="#e6e6e6" >A</text>
<line x1="168.40" y1="279.00" x2="168.40" y2="301.00" stroke="#5a5a5a" stroke-width="1.2" />
<text transform="translate(114.33 296.70) scale(1.0000 1)" x="0" y="0" font-size="19" font-weight="normal" fill="#e6e6e6" >B</text>
<line x1="264.60" y1="279.00" x2="264.60" y2="301.00" stroke="#5a5a5a" stroke-width="1.2" />
<text transform="translate(209.62 296.70) scale(1.0000 1)" x="0" y="0" font-size="19" font-weight="normal" fill="#e6e6e6" >C</text>
<line x1="360.40" y1="279.00" x2="360.40" y2="301.00" stroke="#5a5a5a" stroke-width="1.2" />
<text transform="translate(305.62 296.70) scale(1.0000 1)" x="0" y="0" font-size="19" font-weight="normal" fill="#e6e6e6" >D</text>
<line x1="456.60" y1="279.00" x2="456.60" y2="301.00" stroke="#5a5a5a" stroke-width="1.2" />
<text transform="translate(402.12 296.70) scale(1.0000 1)" x="0" y="0" font-size="19" font-weight="normal" fill="#e6e6e6" >E</text>
<line x1="552.40" y1="279.00" x2="552.40" y2="301.00" stroke="#5a5a5a" stroke-width="1.2" />
<text transform="translate(498.75 296.70) scale(1.0000 1)" x="0" y="0" font-size="19" font-weight="normal" fill="#e6e6e6" >F</text>
<line x1="708.60" y1="279.00" x2="708.60" y2="301.00" stroke="#5a5a5a" stroke-width="1.2" />
<text transform="translate(623.12 296.70) scale(1.0000 1)" x="0" y="0" font-size="19" font-weight="normal" fill="#e6e6e6" >G</text>
<line x1="864.40" y1="279.00" x2="864.40" y2="301.00" stroke="#5a5a5a" stroke-width="1.2" />
<text transform="translate(779.62 296.70) scale(1.0000 1)" x="0" y="0" font-size="19" font-weight="normal" fill="#e6e6e6" >H</text>
<line x1="1020.50" y1="279.00" x2="1020.50" y2="301.00" stroke="#5a5a5a" stroke-width="1.2" />
<text transform="translate(939.83 296.70) scale(1.0000 1)" x="0" y="0" font-size="19" font-weight="normal" fill="#e6e6e6" >I</text>
<line x1="1176.70" y1="279.00" x2="1176.70" y2="301.00" stroke="#5a5a5a" stroke-width="1.2" />
<text transform="translate(1093.85 296.70) scale(1.0000 1)" x="0" y="0" font-size="19" font-weight="normal" fill="#e6e6e6" >J</text>
<line x1="1332.50" y1="279.00" x2="1332.50" y2="301.00" stroke="#5a5a5a" stroke-width="1.2" />
<text transform="translate(1248.22 296.70) scale(1.0000 1)" x="0" y="0" font-size="19" font-weight="normal" fill="#e6e6e6" >K</text>
<line x1="1488.40" y1="279.00" x2="1488.40" y2="301.00" stroke="#5a5a5a" stroke-width="1.2" />
<text transform="translate(1405.20 296.70) scale(1.0000 1)" x="0" y="0" font-size="19" font-weight="normal" fill="#e6e6e6" >L</text>
<line x1="1644.20" y1="279.00" x2="1644.20" y2="301.00" stroke="#5a5a5a" stroke-width="1.2" />
<text transform="translate(1558.43 296.70) scale(1.0000 1)" x="0" y="0" font-size="19" font-weight="normal" fill="#e6e6e6" >M</text>
<line x1="1800.50" y1="279.00" x2="1800.50" y2="301.00" stroke="#5a5a5a" stroke-width="1.2" />
<text transform="translate(1715.47 296.70) scale(1.0000 1)" x="0" y="0" font-size="19" font-weight="normal" fill="#e6e6e6" >N</text>
<line x1="1828.50" y1="279.00" x2="1828.50" y2="301.00" stroke="#5a5a5a" stroke-width="1.2" />
<text transform="translate(1807.12 296.70) scale(1.0000 1)" x="0" y="0" font-size="19" font-weight="normal" fill="#e6e6e6" >O</text>
<line x1="1920.30" y1="279.00" x2="1920.30" y2="301.00" stroke="#5a5a5a" stroke-width="1.2" />
<text transform="translate(1868.03 296.70) scale(1.0000 1)" x="0" y="0" font-size="19" font-weight="normal" fill="#e6e6e6" >P</text>
<line x1="2044.00" y1="279.00" x2="2044.00" y2="301.00" stroke="#5a5a5a" stroke-width="1.2" />
<text transform="translate(1974.78 296.70) scale(1.0000 1)" x="0" y="0" font-size="19" font-weight="normal" fill="#e6e6e6" >Q</text>
<line x1="2136.30" y1="279.00" x2="2136.30" y2="301.00" stroke="#5a5a5a" stroke-width="1.2" />
<text transform="translate(2083.28 296.70) scale(1.0000 1)" x="0" y="0" font-size="19" font-weight="normal" fill="#e6e6e6" >R</text>
<line x1="2228.40" y1="279.00" x2="2228.40" y2="301.00" stroke="#5a5a5a" stroke-width="1.2" />
<text transform="translate(2175.98 296.70) scale(1.0000 1)" x="0" y="0" font-size="19" font-weight="normal" fill="#e6e6e6" >S</text>
<line x1="2320.50" y1="279.00" x2="2320.50" y2="301.00" stroke="#5a5a5a" stroke-width="1.2" />
<text transform="translate(2268.70 296.70) scale(1.0000 1)" x="0" y="0" font-size="19" font-weight="normal" fill="#e6e6e6" >T</text>
<line x1="2412.00" y1="279.00" x2="2412.00" y2="301.00" stroke="#5a5a5a" stroke-width="1.2" />
<text transform="translate(2359.38 296.70) scale(1.0000 1)" x="0" y="0" font-size="19" font-weight="normal" fill="#e6e6e6" >U</text>
<line x1="2504.00" y1="279.00" x2="2504.00" y2="301.00" stroke="#5a5a5a" stroke-width="1.2" />
<text transform="translate(2451.62 296.70) scale(1.0000 1)" x="0" y="0" font-size="19" font-weight="normal" fill="#e6e6e6" >V</text>
<line x1="2596.00" y1="279.00" x2="2596.00" y2="301.00" stroke="#5a5a5a" stroke-width="1.2" />
<text transform="translate(2541.00 296.70) scale(1.0000 1)" x="0" y="0" font-size="19" font-weight="normal" fill="#e6e6e6" >W</text>
<line x1="2688.00" y1="279.00" x2="2688.00" y2="301.00" stroke="#5a5a5a" stroke-width="1.2" />
<text transform="translate(2635.62 296.70) scale(1.0000 1)" x="0" y="0" font-size="19" font-weight="normal" fill="#e6e6e6" >X</text>
<line x1="2780.00" y1="279.00" x2="2780.00" y2="301.00" stroke="#5a5a5a" stroke-width="1.2" />
<text transform="translate(2727.62 296.70) scale(1.0000 1)" x="0" y="0" font-size="19" font-weight="normal" fill="#e6e6e6" >Y</text>
<line x1="2872.00" y1="279.00" x2="2872.00" y2="301.00" stroke="#5a5a5a" stroke-width="1.2" />
<text transform="translate(2820.25 296.70) scale(1.0000 1)" x="0" y="0" font-size="19" font-weight="normal" fill="#e6e6e6" >Z</text>
<line x1="47.00" y1="279.00" x2="47.00" y2="301.00" stroke="#9a9a9a" stroke-width="1" />
<line x1="73.00" y1="279.00" x2="73.00" y2="301.00" stroke="#9a9a9a" stroke-width="1" />
<path d="M44 283 L44 298 L28.5 298 Z" stroke="none" fill="#707070" stroke-width="1" />
<rect x="47.00" y="301.00" width="2813.00" height="1369.00" fill="#ffffff" />
<rect x="11.00" y="301.00" width="36.00" height="1369.00" fill="#0a0a0a" />
<rect x="11.00" y="301.50" width="36.00" height="36.90" fill="#6b6b6b" />
<defs><clipPath id="rh6"><rect x="11" y="463.8" width="36" height="7.9"/></clipPath></defs>
<line x1="11.00" y1="338.40" x2="47.00" y2="338.40" stroke="#4a4a4a" stroke-width="1.2" />
<text transform="translate(23.97 333.60) scale(1.0200 1)" x="0" y="0" font-size="18.6" font-weight="normal" fill="#ececec" >1</text>
<line x1="11.00" y1="373.60" x2="47.00" y2="373.60" stroke="#4a4a4a" stroke-width="1.2" />
<text transform="translate(23.97 368.80) scale(1.0200 1)" x="0" y="0" font-size="18.6" font-weight="normal" fill="#ececec" >2</text>
<line x1="11.00" y1="408.00" x2="47.00" y2="408.00" stroke="#4a4a4a" stroke-width="1.2" />
<text transform="translate(23.97 403.20) scale(1.0200 1)" x="0" y="0" font-size="18.6" font-weight="normal" fill="#ececec" >3</text>
<line x1="11.00" y1="432.80" x2="47.00" y2="432.80" stroke="#4a4a4a" stroke-width="1.2" />
<text transform="translate(23.97 428.00) scale(1.0200 1)" x="0" y="0" font-size="18.6" font-weight="normal" fill="#ececec" >4</text>
<line x1="11.00" y1="463.80" x2="47.00" y2="463.80" stroke="#4a4a4a" stroke-width="1.2" />
<text transform="translate(23.97 459.00) scale(1.0200 1)" x="0" y="0" font-size="18.6" font-weight="normal" fill="#ececec" >5</text>
<line x1="11.00" y1="471.70" x2="47.00" y2="471.70" stroke="#4a4a4a" stroke-width="1.2" />
<g clip-path="url(#rh6)">
<text transform="translate(23.97 466.70) scale(1.0200 1)" x="0" y="0" font-size="18.5" font-weight="normal" fill="#ececec" >6</text>
</g>
<line x1="11.00" y1="501.50" x2="47.00" y2="501.50" stroke="#4a4a4a" stroke-width="1.2" />
<text transform="translate(23.97 496.70) scale(1.0200 1)" x="0" y="0" font-size="18.6" font-weight="normal" fill="#ececec" >7</text>
<line x1="11.00" y1="527.50" x2="47.00" y2="527.50" stroke="#4a4a4a" stroke-width="1.2" />
<text transform="translate(23.97 522.70) scale(1.0200 1)" x="0" y="0" font-size="18.6" font-weight="normal" fill="#ececec" >8</text>
<line x1="11.00" y1="564.20" x2="47.00" y2="564.20" stroke="#4a4a4a" stroke-width="1.2" />
<text transform="translate(23.97 557.60) scale(1.0200 1)" x="0" y="0" font-size="18.6" font-weight="normal" fill="#ececec" >9</text>
<line x1="11.00" y1="601.00" x2="47.00" y2="601.00" stroke="#4a4a4a" stroke-width="1.2" />
<text x="18.74" y="596.20" font-size="18.6" font-weight="normal" fill="#ececec" textLength="20.99" lengthAdjust="spacingAndGlyphs" >10</text>
<line x1="11.00" y1="637.60" x2="47.00" y2="637.60" stroke="#4a4a4a" stroke-width="1.2" />
<text x="19.38" y="632.80" font-size="18.6" font-weight="normal" fill="#ececec" textLength="19.59" lengthAdjust="spacingAndGlyphs" >11</text>
<line x1="11.00" y1="674.40" x2="47.00" y2="674.40" stroke="#4a4a4a" stroke-width="1.2" />
<text x="18.74" y="669.60" font-size="18.6" font-weight="normal" fill="#ececec" textLength="20.99" lengthAdjust="spacingAndGlyphs" >12</text>
<line x1="11.00" y1="711.20" x2="47.00" y2="711.20" stroke="#4a4a4a" stroke-width="1.2" />
<text x="18.74" y="706.40" font-size="18.6" font-weight="normal" fill="#ececec" textLength="20.99" lengthAdjust="spacingAndGlyphs" >13</text>
<line x1="11.00" y1="748.00" x2="47.00" y2="748.00" stroke="#4a4a4a" stroke-width="1.2" />
<text x="18.74" y="743.20" font-size="18.6" font-weight="normal" fill="#ececec" textLength="20.99" lengthAdjust="spacingAndGlyphs" >14</text>
<line x1="11.00" y1="785.20" x2="47.00" y2="785.20" stroke="#4a4a4a" stroke-width="1.2" />
<text x="18.74" y="780.40" font-size="18.6" font-weight="normal" fill="#ececec" textLength="20.99" lengthAdjust="spacingAndGlyphs" >15</text>
<line x1="11.00" y1="822.20" x2="47.00" y2="822.20" stroke="#4a4a4a" stroke-width="1.2" />
<text x="18.74" y="817.40" font-size="18.6" font-weight="normal" fill="#ececec" textLength="20.99" lengthAdjust="spacingAndGlyphs" >16</text>
<line x1="11.00" y1="859.40" x2="47.00" y2="859.40" stroke="#4a4a4a" stroke-width="1.2" />
<text x="18.74" y="854.60" font-size="18.6" font-weight="normal" fill="#ececec" textLength="20.99" lengthAdjust="spacingAndGlyphs" >17</text>
<line x1="11.00" y1="896.60" x2="47.00" y2="896.60" stroke="#4a4a4a" stroke-width="1.2" />
<text x="18.74" y="891.80" font-size="18.6" font-weight="normal" fill="#ececec" textLength="20.99" lengthAdjust="spacingAndGlyphs" >18</text>
<line x1="11.00" y1="933.30" x2="47.00" y2="933.30" stroke="#4a4a4a" stroke-width="1.2" />
<text x="18.74" y="928.50" font-size="18.6" font-weight="normal" fill="#ececec" textLength="20.99" lengthAdjust="spacingAndGlyphs" >19</text>
<line x1="11.00" y1="970.30" x2="47.00" y2="970.30" stroke="#4a4a4a" stroke-width="1.2" />
<text x="18.74" y="965.50" font-size="18.6" font-weight="normal" fill="#ececec" textLength="20.99" lengthAdjust="spacingAndGlyphs" >20</text>
<line x1="11.00" y1="1007.30" x2="47.00" y2="1007.30" stroke="#4a4a4a" stroke-width="1.2" />
<text x="18.74" y="1002.50" font-size="18.6" font-weight="normal" fill="#ececec" textLength="20.99" lengthAdjust="spacingAndGlyphs" >21</text>
<line x1="11.00" y1="1044.60" x2="47.00" y2="1044.60" stroke="#4a4a4a" stroke-width="1.2" />
<text x="18.74" y="1039.80" font-size="18.6" font-weight="normal" fill="#ececec" textLength="20.99" lengthAdjust="spacingAndGlyphs" >22</text>
<line x1="11.00" y1="1081.30" x2="47.00" y2="1081.30" stroke="#4a4a4a" stroke-width="1.2" />
<text x="18.74" y="1076.50" font-size="18.6" font-weight="normal" fill="#ececec" textLength="20.99" lengthAdjust="spacingAndGlyphs" >23</text>
<line x1="11.00" y1="1118.40" x2="47.00" y2="1118.40" stroke="#4a4a4a" stroke-width="1.2" />
<text x="18.74" y="1113.60" font-size="18.6" font-weight="normal" fill="#ececec" textLength="20.99" lengthAdjust="spacingAndGlyphs" >24</text>
<line x1="11.00" y1="1154.40" x2="47.00" y2="1154.40" stroke="#4a4a4a" stroke-width="1.2" />
<text x="18.74" y="1147.80" font-size="18.6" font-weight="normal" fill="#ececec" textLength="20.99" lengthAdjust="spacingAndGlyphs" >25</text>
<line x1="11.00" y1="1195.30" x2="47.00" y2="1195.30" stroke="#4a4a4a" stroke-width="1.2" />
<text x="18.74" y="1190.50" font-size="18.6" font-weight="normal" fill="#ececec" textLength="20.99" lengthAdjust="spacingAndGlyphs" >28</text>
<line x1="11.00" y1="1235.40" x2="47.00" y2="1235.40" stroke="#4a4a4a" stroke-width="1.2" />
<text x="18.74" y="1230.60" font-size="18.6" font-weight="normal" fill="#ececec" textLength="20.99" lengthAdjust="spacingAndGlyphs" >30</text>
<line x1="11.00" y1="1270.20" x2="47.00" y2="1270.20" stroke="#4a4a4a" stroke-width="1.2" />
<text x="18.74" y="1265.40" font-size="18.6" font-weight="normal" fill="#ececec" textLength="20.99" lengthAdjust="spacingAndGlyphs" >31</text>
<line x1="11.00" y1="1306.20" x2="47.00" y2="1306.20" stroke="#4a4a4a" stroke-width="1.2" />
<text x="18.74" y="1301.40" font-size="18.6" font-weight="normal" fill="#ececec" textLength="20.99" lengthAdjust="spacingAndGlyphs" >32</text>
<line x1="11.00" y1="1341.10" x2="47.00" y2="1341.10" stroke="#4a4a4a" stroke-width="1.2" />
<text x="18.74" y="1336.30" font-size="18.6" font-weight="normal" fill="#ececec" textLength="20.99" lengthAdjust="spacingAndGlyphs" >33</text>
<line x1="11.00" y1="1377.50" x2="47.00" y2="1377.50" stroke="#4a4a4a" stroke-width="1.2" />
<text x="18.74" y="1372.70" font-size="18.6" font-weight="normal" fill="#ececec" textLength="20.99" lengthAdjust="spacingAndGlyphs" >34</text>
<line x1="11.00" y1="1407.60" x2="47.00" y2="1407.60" stroke="#4a4a4a" stroke-width="1.2" />
<text x="18.74" y="1402.80" font-size="18.6" font-weight="normal" fill="#ececec" textLength="20.99" lengthAdjust="spacingAndGlyphs" >35</text>
<line x1="11.00" y1="1443.60" x2="47.00" y2="1443.60" stroke="#4a4a4a" stroke-width="1.2" />
<text x="18.74" y="1437.00" font-size="18.6" font-weight="normal" fill="#ececec" textLength="20.99" lengthAdjust="spacingAndGlyphs" >36</text>
<line x1="11.00" y1="1484.70" x2="47.00" y2="1484.70" stroke="#4a4a4a" stroke-width="1.2" />
<text x="18.74" y="1479.90" font-size="18.6" font-weight="normal" fill="#ececec" textLength="20.99" lengthAdjust="spacingAndGlyphs" >38</text>
<line x1="11.00" y1="1524.50" x2="47.00" y2="1524.50" stroke="#4a4a4a" stroke-width="1.2" />
<text x="18.74" y="1519.70" font-size="18.6" font-weight="normal" fill="#ececec" textLength="20.99" lengthAdjust="spacingAndGlyphs" >40</text>
<line x1="11.00" y1="1558.90" x2="47.00" y2="1558.90" stroke="#4a4a4a" stroke-width="1.2" />
<text x="18.74" y="1554.10" font-size="18.6" font-weight="normal" fill="#ececec" textLength="20.99" lengthAdjust="spacingAndGlyphs" >41</text>
<line x1="11.00" y1="1595.30" x2="47.00" y2="1595.30" stroke="#4a4a4a" stroke-width="1.2" />
<text x="18.74" y="1590.50" font-size="18.6" font-weight="normal" fill="#ececec" textLength="20.99" lengthAdjust="spacingAndGlyphs" >42</text>
<line x1="11.00" y1="1624.40" x2="47.00" y2="1624.40" stroke="#4a4a4a" stroke-width="1.2" />
<text x="18.74" y="1619.60" font-size="18.6" font-weight="normal" fill="#ececec" textLength="20.99" lengthAdjust="spacingAndGlyphs" >43</text>
<line x1="11.00" y1="1649.10" x2="47.00" y2="1649.10" stroke="#4a4a4a" stroke-width="1.2" />
<text x="18.74" y="1644.30" font-size="18.6" font-weight="normal" fill="#ececec" textLength="20.99" lengthAdjust="spacingAndGlyphs" >44</text>
<line x1="11.00" y1="1669.50" x2="47.00" y2="1669.50" stroke="#4a4a4a" stroke-width="1.2" />
<text x="18.74" y="1669.50" font-size="18.6" font-weight="normal" fill="#ececec" textLength="20.99" lengthAdjust="spacingAndGlyphs" >45</text>
<line x1="11.00" y1="1157.70" x2="47.00" y2="1157.70" stroke="#4a4a4a" stroke-width="1.2" />
<line x1="11.00" y1="1161.30" x2="47.00" y2="1161.30" stroke="#4a4a4a" stroke-width="1.2" />
<line x1="11.00" y1="1200.30" x2="47.00" y2="1200.30" stroke="#4a4a4a" stroke-width="1.2" />
<line x1="11.00" y1="1448.60" x2="47.00" y2="1448.60" stroke="#4a4a4a" stroke-width="1.2" />
<line x1="11.00" y1="1489.30" x2="47.00" y2="1489.30" stroke="#4a4a4a" stroke-width="1.2" />
<line x1="47.00" y1="301.00" x2="47.00" y2="1670.00" stroke="#8a8a8a" stroke-width="1" />
<line x1="11.00" y1="301.80" x2="47.00" y2="301.80" stroke="#c8c8c8" stroke-width="1.2" />
<line x1="11.00" y1="338.40" x2="47.00" y2="338.40" stroke="#c8c8c8" stroke-width="1.2" />
<rect x="46.00" y="300.00" width="28.00" height="2.20" fill="#1e8c45" />
<rect x="46.00" y="300.00" width="2.20" height="38.80" fill="#1e8c45" />
<line x1="47.00" y1="433.20" x2="2860.00" y2="433.20" stroke="#a6a6a6" stroke-width="1.3" />
<text x="79.50" y="333.00" font-size="34.5" font-weight="bold" fill="#1f1f1f" textLength="475.90" lengthAdjust="spacingAndGlyphs"  stroke="#1f1f1f" stroke-width="0.55">Returns on Invested Capital</text>
<text x="78.00" y="366.60" font-size="28.6" font-weight="bold" fill="#000000" textLength="268.64" lengthAdjust="spacingAndGlyphs"  stroke="#000000" stroke-width="0.55">ABC Company Inc.</text>
<text x="76.00" y="397.80" font-size="19.8" font-weight="bold" fill="#3274e2" textLength="226.70" lengthAdjust="spacingAndGlyphs"  stroke="#3274e2" stroke-width="0.55">Go to Table of Contents</text>
<rect x="76.00" y="399.40" width="226.60" height="1.60" fill="#3274e2" />
<rect x="72.20" y="434.00" width="480.80" height="29.90" fill="#4a4fd2" />
<rect x="72.20" y="470.70" width="480.80" height="30.60" fill="#4bb3e6" />
<rect x="708.20" y="434.00" width="468.80" height="29.90" fill="#4a4fd2" />
<rect x="708.20" y="470.70" width="468.80" height="30.60" fill="#4bb3e6" />
<rect x="1332.00" y="434.00" width="469.00" height="29.90" fill="#4a4fd2" />
<rect x="1332.00" y="470.70" width="469.00" height="30.60" fill="#4bb3e6" />
<text x="211.50" y="458.20" font-size="25.7" font-weight="bold" fill="#fff" textLength="203.21" lengthAdjust="spacingAndGlyphs"  stroke="#fff" stroke-width="0.55">Years to payback</text>
<text x="754.40" y="458.20" font-size="25.7" font-weight="bold" fill="#fff" textLength="368.90" lengthAdjust="spacingAndGlyphs"  stroke="#fff" stroke-width="0.55">5-Year Cash Generated ($&#x27;000)</text>
<text x="1493.00" y="458.20" font-size="25.7" font-weight="bold" fill="#fff" textLength="146.04" lengthAdjust="spacingAndGlyphs"  stroke="#fff" stroke-width="0.55">ROIC - 2030</text>
<text x="294.60" y="494.60" font-size="24.5" font-weight="bold" fill="#fff" textLength="37.06" lengthAdjust="spacingAndGlyphs"  stroke="#fff" stroke-width="0.55">0.6</text>
<text x="904.00" y="494.60" font-size="24.5" font-weight="bold" fill="#fff" textLength="67.06" lengthAdjust="spacingAndGlyphs"  stroke="#fff" stroke-width="0.55">2,040</text>
<text x="1526.60" y="494.60" font-size="24.5" font-weight="bold" fill="#fff" textLength="80.36" lengthAdjust="spacingAndGlyphs"  stroke="#fff" stroke-width="0.55">33.4%</text>
<rect x="72.00" y="527.20" width="1729.00" height="36.60" fill="#4a4fd2" />
<text x="626.60" y="556.60" font-size="28.2" font-weight="bold" fill="#fff" textLength="610.73" lengthAdjust="spacingAndGlyphs"  stroke="#fff" stroke-width="0.55">Returns on Invested Capital Chart ($&#x27;000)</text>
<rect x="278.00" y="595.80" width="45.70" height="12.80" fill="#4bb3e6" />
<text x="329.00" y="610.40" font-size="25" font-weight="bold" fill="#111111" textLength="265.01" lengthAdjust="spacingAndGlyphs"  stroke="#111111" stroke-width="0.55">Total Invested Capital</text>
<rect x="775.00" y="595.80" width="45.70" height="12.80" fill="#f07b6e" />
<text x="826.70" y="610.40" font-size="25" font-weight="bold" fill="#111111" textLength="473.20" lengthAdjust="spacingAndGlyphs"  stroke="#111111" stroke-width="0.55">Net Operating Profit After Tax (NOPAT)</text>
<line x1="1479.30" y1="601.70" x2="1528.00" y2="601.70" stroke="#2db5a3" stroke-width="4.5" />
<circle cx="1502" cy="601.7" r="7" fill="#2db5a3"/>
<text x="1532.00" y="610.40" font-size="25" font-weight="bold" fill="#111111" textLength="62.60" lengthAdjust="spacingAndGlyphs"  stroke="#111111" stroke-width="0.55">ROIC</text>
<line x1="211.60" y1="966.50" x2="1800.00" y2="966.50" stroke="#5ba3cf" stroke-width="1.1" />
<text x="152.98" y="972.22" font-size="19.8" font-weight="bold" fill="#111111" textLength="34.27" lengthAdjust="spacingAndGlyphs"  stroke="#111111" stroke-width="0.55">500</text>
<line x1="211.60" y1="915.50" x2="1800.00" y2="915.50" stroke="#5ba3cf" stroke-width="1.1" />
<text x="135.82" y="921.93" font-size="19.8" font-weight="bold" fill="#111111" textLength="51.40" lengthAdjust="spacingAndGlyphs"  stroke="#111111" stroke-width="0.55">1,000</text>
<line x1="211.60" y1="865.50" x2="1800.00" y2="865.50" stroke="#5ba3cf" stroke-width="1.1" />
<text x="135.82" y="871.64" font-size="19.8" font-weight="bold" fill="#111111" textLength="51.40" lengthAdjust="spacingAndGlyphs"  stroke="#111111" stroke-width="0.55">1,500</text>
<line x1="211.60" y1="815.50" x2="1800.00" y2="815.50" stroke="#5ba3cf" stroke-width="1.1" />
<text x="135.82" y="821.36" font-size="19.8" font-weight="bold" fill="#111111" textLength="51.40" lengthAdjust="spacingAndGlyphs"  stroke="#111111" stroke-width="0.55">2,000</text>
<line x1="211.60" y1="765.50" x2="1800.00" y2="765.50" stroke="#5ba3cf" stroke-width="1.1" />
<text x="135.82" y="771.08" font-size="19.8" font-weight="bold" fill="#111111" textLength="51.40" lengthAdjust="spacingAndGlyphs"  stroke="#111111" stroke-width="0.55">2,500</text>
<line x1="211.60" y1="714.50" x2="1800.00" y2="714.50" stroke="#5ba3cf" stroke-width="1.1" />
<text x="135.82" y="720.79" font-size="19.8" font-weight="bold" fill="#111111" textLength="51.40" lengthAdjust="spacingAndGlyphs"  stroke="#111111" stroke-width="0.55">3,000</text>
<line x1="211.60" y1="664.50" x2="1800.00" y2="664.50" stroke="#5ba3cf" stroke-width="1.1" />
<text x="135.82" y="670.50" font-size="19.8" font-weight="bold" fill="#111111" textLength="51.40" lengthAdjust="spacingAndGlyphs"  stroke="#111111" stroke-width="0.55">3,500</text>
<text transform="translate(180.07 1023.50) scale(1.1000 1)" x="0" y="0" font-size="20.4" font-weight="bold" fill="#111111"  stroke="#111111" stroke-width="0.55">-</text>
<rect x="249.00" y="874.39" width="121.40" height="142.11" fill="#4bb3e6" />
<rect x="370.40" y="1008.55" width="121.70" height="7.95" fill="#f07b6e" />
<rect x="566.60" y="869.57" width="121.40" height="146.93" fill="#4bb3e6" />
<rect x="688.00" y="998.10" width="121.70" height="18.40" fill="#f07b6e" />
<rect x="884.20" y="845.23" width="121.40" height="171.27" fill="#4bb3e6" />
<rect x="1005.60" y="978.79" width="121.70" height="37.71" fill="#f07b6e" />
<rect x="1201.80" y="799.07" width="121.40" height="217.43" fill="#4bb3e6" />
<rect x="1323.20" y="957.06" width="121.70" height="59.44" fill="#f07b6e" />
<rect x="1519.40" y="727.86" width="121.40" height="288.64" fill="#4bb3e6" />
<rect x="1640.80" y="932.12" width="121.70" height="84.38" fill="#f07b6e" />
<line x1="211.60" y1="1016.50" x2="1800.00" y2="1016.50" stroke="#4bb3e6" stroke-width="2.6" />
<line x1="211.60" y1="1016.50" x2="211.60" y2="1023.50" stroke="#4bb3e6" stroke-width="2" />
<line x1="529.20" y1="1016.50" x2="529.20" y2="1023.50" stroke="#4bb3e6" stroke-width="2" />
<line x1="846.80" y1="1016.50" x2="846.80" y2="1023.50" stroke="#4bb3e6" stroke-width="2" />
<line x1="1164.40" y1="1016.50" x2="1164.40" y2="1023.50" stroke="#4bb3e6" stroke-width="2" />
<line x1="1482.00" y1="1016.50" x2="1482.00" y2="1023.50" stroke="#4bb3e6" stroke-width="2" />
<line x1="1799.60" y1="1016.50" x2="1799.60" y2="1023.50" stroke="#4bb3e6" stroke-width="2" />
<polyline points="370.4,967.2 688.0,904.7 1005.6,807.9 1323.2,747.2 1640.8,722.6" fill="none" stroke="#2db5a3" stroke-width="4.6" stroke-linejoin="round"/>
<circle cx="370.40" cy="967.22" r="39.5" fill="#2db5a3"/>
<text x="343.99" y="975.42" font-size="20.4" font-weight="bold" fill="#ffffff" textLength="52.80" lengthAdjust="spacingAndGlyphs"  stroke="#ffffff" stroke-width="0.55">5.6%</text>
<text x="343.18" y="1087.70" font-size="21.4" font-weight="bold" fill="#111111" textLength="54.52" lengthAdjust="spacingAndGlyphs"  stroke="#111111" stroke-width="0.55">2026</text>
<circle cx="688.00" cy="904.74" r="39.5" fill="#2db5a3"/>
<text x="655.09" y="912.94" font-size="20.4" font-weight="bold" fill="#ffffff" textLength="65.69" lengthAdjust="spacingAndGlyphs"  stroke="#ffffff" stroke-width="0.55">12.7%</text>
<text x="660.78" y="1087.70" font-size="21.4" font-weight="bold" fill="#111111" textLength="54.52" lengthAdjust="spacingAndGlyphs"  stroke="#111111" stroke-width="0.55">2027</text>
<circle cx="1005.60" cy="807.94" r="39.5" fill="#2db5a3"/>
<text x="972.69" y="816.14" font-size="20.4" font-weight="bold" fill="#ffffff" textLength="65.69" lengthAdjust="spacingAndGlyphs"  stroke="#ffffff" stroke-width="0.55">23.7%</text>
<text x="978.38" y="1087.70" font-size="21.4" font-weight="bold" fill="#111111" textLength="54.52" lengthAdjust="spacingAndGlyphs"  stroke="#111111" stroke-width="0.55">2028</text>
<circle cx="1323.20" cy="747.22" r="39.5" fill="#2db5a3"/>
<text x="1290.29" y="755.42" font-size="20.4" font-weight="bold" fill="#ffffff" textLength="65.69" lengthAdjust="spacingAndGlyphs"  stroke="#ffffff" stroke-width="0.55">30.6%</text>
<text x="1295.98" y="1087.70" font-size="21.4" font-weight="bold" fill="#111111" textLength="54.52" lengthAdjust="spacingAndGlyphs"  stroke="#111111" stroke-width="0.55">2029</text>
<circle cx="1640.80" cy="722.58" r="39.5" fill="#2db5a3"/>
<text x="1607.89" y="730.78" font-size="20.4" font-weight="bold" fill="#ffffff" textLength="65.69" lengthAdjust="spacingAndGlyphs"  stroke="#ffffff" stroke-width="0.55">33.4%</text>
<text x="1613.58" y="1087.70" font-size="21.4" font-weight="bold" fill="#111111" textLength="54.52" lengthAdjust="spacingAndGlyphs"  stroke="#111111" stroke-width="0.55">2030</text>
<rect x="72.00" y="1118.00" width="1729.00" height="36.50" fill="#4a4fd2" />
<text x="670.80" y="1148.60" font-size="30" font-weight="bold" fill="#fff" textLength="523.12" lengthAdjust="spacingAndGlyphs"  stroke="#fff" stroke-width="0.55">Returns on Invested Capital ($&#x27;000)</text>
<rect x="73.00" y="1160.20" width="1727.00" height="34.40" fill="#6e73e7" />
<line x1="1020.50" y1="1160.20" x2="1020.50" y2="1194.60" stroke="#ffffff" stroke-width="1.4" />
<line x1="1176.70" y1="1160.20" x2="1176.70" y2="1194.60" stroke="#ffffff" stroke-width="1.4" />
<line x1="1332.50" y1="1160.20" x2="1332.50" y2="1194.60" stroke="#ffffff" stroke-width="1.4" />
<line x1="1488.40" y1="1160.20" x2="1488.40" y2="1194.60" stroke="#ffffff" stroke-width="1.4" />
<line x1="1644.20" y1="1160.20" x2="1644.20" y2="1194.60" stroke="#ffffff" stroke-width="1.4" />
<text x="85.60" y="1185.40" font-size="20.7" font-weight="bold" fill="#fff" textLength="102.26" lengthAdjust="spacingAndGlyphs"  stroke="#fff" stroke-width="0.55">Fiscal Year</text>
<text x="1075.00" y="1185.40" font-size="20.7" font-weight="bold" fill="#fff" textLength="47.10" lengthAdjust="spacingAndGlyphs"  stroke="#fff" stroke-width="0.55">2026</text>
<text x="1231.00" y="1185.40" font-size="20.7" font-weight="bold" fill="#fff" textLength="47.10" lengthAdjust="spacingAndGlyphs"  stroke="#fff" stroke-width="0.55">2027</text>
<text x="1386.85" y="1185.40" font-size="20.7" font-weight="bold" fill="#fff" textLength="47.10" lengthAdjust="spacingAndGlyphs"  stroke="#fff" stroke-width="0.55">2028</text>
<text x="1542.70" y="1185.40" font-size="20.7" font-weight="bold" fill="#fff" textLength="47.10" lengthAdjust="spacingAndGlyphs"  stroke="#fff" stroke-width="0.55">2029</text>
<text x="1698.75" y="1185.40" font-size="20.7" font-weight="bold" fill="#fff" textLength="47.10" lengthAdjust="spacingAndGlyphs"  stroke="#fff" stroke-width="0.55">2030</text>
<text x="94.70" y="1225.30" font-size="19.5" font-weight="normal" fill="#111111" textLength="47.04" lengthAdjust="spacingAndGlyphs" >Debts</text>
<text x="1136.40" y="1225.50" font-size="19.5" font-weight="normal" fill="#111111" textLength="29.03" lengthAdjust="spacingAndGlyphs" >667</text>
<text x="1292.20" y="1225.50" font-size="19.5" font-weight="normal" fill="#111111" textLength="29.03" lengthAdjust="spacingAndGlyphs" >562</text>
<text x="1448.10" y="1225.50" font-size="19.5" font-weight="normal" fill="#111111" textLength="29.03" lengthAdjust="spacingAndGlyphs" >453</text>
<text x="1603.90" y="1225.50" font-size="19.5" font-weight="normal" fill="#111111" textLength="29.03" lengthAdjust="spacingAndGlyphs" >340</text>
<text x="1760.20" y="1225.50" font-size="19.5" font-weight="normal" fill="#111111" textLength="29.03" lengthAdjust="spacingAndGlyphs" >222</text>
<text x="94.70" y="1260.00" font-size="19.5" font-weight="normal" fill="#111111" textLength="51.05" lengthAdjust="spacingAndGlyphs" >Equity</text>
<text x="1136.40" y="1260.40" font-size="19.5" font-weight="normal" fill="#111111" textLength="29.03" lengthAdjust="spacingAndGlyphs" >747</text>
<text x="1292.20" y="1260.40" font-size="19.5" font-weight="normal" fill="#111111" textLength="29.03" lengthAdjust="spacingAndGlyphs" >900</text>
<text x="1433.60" y="1260.40" font-size="19.5" font-weight="normal" fill="#111111" textLength="43.54" lengthAdjust="spacingAndGlyphs" >1,250</text>
<text x="1589.40" y="1260.40" font-size="19.5" font-weight="normal" fill="#111111" textLength="43.54" lengthAdjust="spacingAndGlyphs" >1,822</text>
<text x="1745.70" y="1260.40" font-size="19.5" font-weight="normal" fill="#111111" textLength="43.54" lengthAdjust="spacingAndGlyphs" >2,648</text>
<rect x="72.00" y="1270.00" width="1729.00" height="36.00" fill="#4bb3e6" />
<text x="77.60" y="1296.80" font-size="22.6" font-weight="bold" fill="#fff" textLength="242.51" lengthAdjust="spacingAndGlyphs"  stroke="#fff" stroke-width="0.55">Total Invested Capital</text>
<text x="1110.80" y="1296.50" font-size="20.7" font-weight="bold" fill="#fff" textLength="52.82" lengthAdjust="spacingAndGlyphs"  stroke="#fff" stroke-width="0.55">1,413</text>
<text x="1266.60" y="1296.50" font-size="20.7" font-weight="bold" fill="#fff" textLength="52.82" lengthAdjust="spacingAndGlyphs"  stroke="#fff" stroke-width="0.55">1,461</text>
<text x="1422.50" y="1296.50" font-size="20.7" font-weight="bold" fill="#fff" textLength="52.82" lengthAdjust="spacingAndGlyphs"  stroke="#fff" stroke-width="0.55">1,703</text>
<text x="1578.30" y="1296.50" font-size="20.7" font-weight="bold" fill="#fff" textLength="52.82" lengthAdjust="spacingAndGlyphs"  stroke="#fff" stroke-width="0.55">2,162</text>
<text x="1734.60" y="1296.50" font-size="20.7" font-weight="bold" fill="#fff" textLength="52.82" lengthAdjust="spacingAndGlyphs"  stroke="#fff" stroke-width="0.55">2,870</text>
<text x="94.70" y="1331.50" font-size="19.5" font-weight="normal" fill="#111111" textLength="325.44" lengthAdjust="spacingAndGlyphs" >Net Operating Profit After Tax (NOPAT)</text>
<text x="1145.99" y="1331.40" font-size="19.5" font-weight="normal" fill="#111111" textLength="19.35" lengthAdjust="spacingAndGlyphs" >79</text>
<text x="1292.20" y="1331.40" font-size="19.5" font-weight="normal" fill="#111111" textLength="29.03" lengthAdjust="spacingAndGlyphs" >183</text>
<text x="1448.10" y="1331.40" font-size="19.5" font-weight="normal" fill="#111111" textLength="29.03" lengthAdjust="spacingAndGlyphs" >375</text>
<text x="1603.90" y="1331.40" font-size="19.5" font-weight="normal" fill="#111111" textLength="29.03" lengthAdjust="spacingAndGlyphs" >591</text>
<text x="1760.20" y="1331.40" font-size="19.5" font-weight="normal" fill="#111111" textLength="29.03" lengthAdjust="spacingAndGlyphs" >839</text>
<rect x="72.00" y="1341.00" width="1729.00" height="36.60" fill="#4bb3e6" />
<text x="77.60" y="1367.60" font-size="22.6" font-weight="bold" fill="#fff" textLength="58.50" lengthAdjust="spacingAndGlyphs"  stroke="#fff" stroke-width="0.55">ROIC</text>
<text x="1120.40" y="1367.30" font-size="20.7" font-weight="bold" fill="#fff" textLength="51.95" lengthAdjust="spacingAndGlyphs"  stroke="#fff" stroke-width="0.55">5.6%</text>
<text x="1263.57" y="1367.30" font-size="20.7" font-weight="bold" fill="#fff" textLength="64.62" lengthAdjust="spacingAndGlyphs"  stroke="#fff" stroke-width="0.55">12.7%</text>
<text x="1419.47" y="1367.30" font-size="20.7" font-weight="bold" fill="#fff" textLength="64.62" lengthAdjust="spacingAndGlyphs"  stroke="#fff" stroke-width="0.55">23.7%</text>
<text x="1575.27" y="1367.30" font-size="20.7" font-weight="bold" fill="#fff" textLength="64.62" lengthAdjust="spacingAndGlyphs"  stroke="#fff" stroke-width="0.55">30.6%</text>
<text x="1731.57" y="1367.30" font-size="20.7" font-weight="bold" fill="#fff" textLength="64.62" lengthAdjust="spacingAndGlyphs"  stroke="#fff" stroke-width="0.55">33.4%</text>
<rect x="72.00" y="1407.20" width="1729.00" height="36.40" fill="#4a4fd2" />
<text x="698.60" y="1436.40" font-size="30" font-weight="bold" fill="#fff" textLength="466.80" lengthAdjust="spacingAndGlyphs"  stroke="#fff" stroke-width="0.55">Payback Period Analysis ($&#x27;000)</text>
<rect x="73.00" y="1449.40" width="1727.00" height="34.20" fill="#6e73e7" />
<line x1="1020.50" y1="1449.40" x2="1020.50" y2="1483.60" stroke="#ffffff" stroke-width="1.4" />
<line x1="1176.70" y1="1449.40" x2="1176.70" y2="1483.60" stroke="#ffffff" stroke-width="1.4" />
<line x1="1332.50" y1="1449.40" x2="1332.50" y2="1483.60" stroke="#ffffff" stroke-width="1.4" />
<line x1="1488.40" y1="1449.40" x2="1488.40" y2="1483.60" stroke="#ffffff" stroke-width="1.4" />
<line x1="1644.20" y1="1449.40" x2="1644.20" y2="1483.60" stroke="#ffffff" stroke-width="1.4" />
<text x="85.60" y="1474.00" font-size="20.7" font-weight="bold" fill="#fff" textLength="102.26" lengthAdjust="spacingAndGlyphs"  stroke="#fff" stroke-width="0.55">Fiscal Year</text>
<text x="1075.00" y="1474.00" font-size="20.7" font-weight="bold" fill="#fff" textLength="47.10" lengthAdjust="spacingAndGlyphs"  stroke="#fff" stroke-width="0.55">2026</text>
<text x="1231.00" y="1474.00" font-size="20.7" font-weight="bold" fill="#fff" textLength="47.10" lengthAdjust="spacingAndGlyphs"  stroke="#fff" stroke-width="0.55">2027</text>
<text x="1386.85" y="1474.00" font-size="20.7" font-weight="bold" fill="#fff" textLength="47.10" lengthAdjust="spacingAndGlyphs"  stroke="#fff" stroke-width="0.55">2028</text>
<text x="1542.70" y="1474.00" font-size="20.7" font-weight="bold" fill="#fff" textLength="47.10" lengthAdjust="spacingAndGlyphs"  stroke="#fff" stroke-width="0.55">2029</text>
<text x="1698.75" y="1474.00" font-size="20.7" font-weight="bold" fill="#fff" textLength="47.10" lengthAdjust="spacingAndGlyphs"  stroke="#fff" stroke-width="0.55">2030</text>
<text x="94.10" y="1513.50" font-size="19.5" font-weight="normal" fill="#111111" textLength="159.56" lengthAdjust="spacingAndGlyphs" >Net Profit After Tax</text>
<text x="1145.99" y="1513.80" font-size="19.5" font-weight="normal" fill="#111111" textLength="19.35" lengthAdjust="spacingAndGlyphs" >79</text>
<text x="1292.20" y="1513.80" font-size="19.5" font-weight="normal" fill="#111111" textLength="29.03" lengthAdjust="spacingAndGlyphs" >183</text>
<text x="1448.10" y="1513.80" font-size="19.5" font-weight="normal" fill="#111111" textLength="29.03" lengthAdjust="spacingAndGlyphs" >375</text>
<text x="1603.90" y="1513.80" font-size="19.5" font-weight="normal" fill="#111111" textLength="29.03" lengthAdjust="spacingAndGlyphs" >591</text>
<text x="1760.20" y="1513.80" font-size="19.5" font-weight="normal" fill="#111111" textLength="29.03" lengthAdjust="spacingAndGlyphs" >839</text>
<text x="94.10" y="1548.30" font-size="19.5" font-weight="normal" fill="#111111" textLength="53.59" lengthAdjust="spacingAndGlyphs" >CAPEX</text>
<text x="1137.57" y="1548.30" font-size="19.5" font-weight="normal" fill="#111111" textLength="34.65" lengthAdjust="spacingAndGlyphs" >(27)</text>
<text transform="translate(1312.10 1549.00) scale(1.4000 1)" x="0" y="0" font-size="19.5" font-weight="normal" fill="#111111" >-</text>
<text transform="translate(1468.00 1549.00) scale(1.4000 1)" x="0" y="0" font-size="19.5" font-weight="normal" fill="#111111" >-</text>
<text transform="translate(1623.80 1549.00) scale(1.4000 1)" x="0" y="0" font-size="19.5" font-weight="normal" fill="#111111" >-</text>
<text transform="translate(1780.10 1549.00) scale(1.4000 1)" x="0" y="0" font-size="19.5" font-weight="normal" fill="#111111" >-</text>
<rect x="72.00" y="1559.00" width="1729.00" height="36.00" fill="#4bb3e6" />
<text x="77.70" y="1585.10" font-size="22.6" font-weight="bold" fill="#fff" textLength="394.85" lengthAdjust="spacingAndGlyphs"  stroke="#fff" stroke-width="0.55">Cumulative Cash Generated (Spent)</text>
<text x="1140.30" y="1584.80" font-size="20.7" font-weight="bold" fill="#fff" textLength="23.48" lengthAdjust="spacingAndGlyphs"  stroke="#fff" stroke-width="0.55">52</text>
<text x="1284.40" y="1584.80" font-size="20.7" font-weight="bold" fill="#fff" textLength="35.22" lengthAdjust="spacingAndGlyphs"  stroke="#fff" stroke-width="0.55">235</text>
<text x="1440.30" y="1584.80" font-size="20.7" font-weight="bold" fill="#fff" textLength="35.22" lengthAdjust="spacingAndGlyphs"  stroke="#fff" stroke-width="0.55">609</text>
<text x="1578.30" y="1584.80" font-size="20.7" font-weight="bold" fill="#fff" textLength="52.82" lengthAdjust="spacingAndGlyphs"  stroke="#fff" stroke-width="0.55">1,201</text>
<text x="1734.60" y="1584.80" font-size="20.7" font-weight="bold" fill="#fff" textLength="52.82" lengthAdjust="spacingAndGlyphs"  stroke="#fff" stroke-width="0.55">2,040</text>
<text x="76.40" y="1616.50" font-size="20.7" font-weight="bold" fill="#1a1a1a" textLength="124.32" lengthAdjust="spacingAndGlyphs"  stroke="#1a1a1a" stroke-width="0.55">Payback year</text>
<rect x="1020.50" y="1596.30" width="156.20" height="28.30" fill="#2db5a3" />
<text transform="translate(1092.95 1616.30) scale(1.0173 1)" x="0" y="0" font-size="20.7" font-weight="bold" fill="#1a1a1a"  stroke="#1a1a1a" stroke-width="0.55">1</text>
<text transform="translate(1250.40 1616.30) scale(1.2000 1)" x="0" y="0" font-size="20.7" font-weight="bold" fill="#1a1a1a"  stroke="#1a1a1a" stroke-width="0.55">-</text>
<text transform="translate(1406.25 1616.30) scale(1.2000 1)" x="0" y="0" font-size="20.7" font-weight="bold" fill="#1a1a1a"  stroke="#1a1a1a" stroke-width="0.55">-</text>
<text transform="translate(1562.10 1616.30) scale(1.2000 1)" x="0" y="0" font-size="20.7" font-weight="bold" fill="#1a1a1a"  stroke="#1a1a1a" stroke-width="0.55">-</text>
<text transform="translate(1718.15 1616.30) scale(1.2000 1)" x="0" y="0" font-size="20.7" font-weight="bold" fill="#1a1a1a"  stroke="#1a1a1a" stroke-width="0.55">-</text>
<rect x="2860.00" y="277.70" width="30.20" height="1392.30" fill="#0a0a0a" />
<rect x="2863.20" y="279.40" width="25.00" height="1388.60" fill="#161616" rx="12" />
<rect x="2869.90" y="303.80" width="12.20" height="1336.20" fill="#9b9b9b" rx="6" />
<path d="M2869.2 296.1 L2876.2 286 L2883.2 296.1 Z" stroke="none" fill="#9b9b9b" stroke-width="1" stroke-linejoin="round"/>
<path d="M2869.2 1654 L2876.2 1664 L2883.2 1654 Z" stroke="none" fill="#9b9b9b" stroke-width="1" />
<rect x="11.00" y="1670.00" width="2879.20" height="47.70" fill="#0a0a0a" />
<path d="M55.5 1685.7 L46 1693 L55.5 1700.3" stroke="#b0b0b0" fill="none" stroke-width="1.6" />
<path d="M94.5 1685.7 L104 1693 L94.5 1700.3" stroke="#d0d0d0" fill="none" stroke-width="1.6" />
<text x="190.00" y="1703.00" font-size="19.8" font-weight="normal" fill="#f0f0f0" textLength="82.05" lengthAdjust="spacingAndGlyphs" >Contents</text>
<rect x="298.80" y="1675.90" width="127.80" height="36.00" fill="#fdf07b" rx="6" />
<text x="313.40" y="1703.00" font-size="19.8" font-weight="normal" fill="#101820" textLength="100.13" lengthAdjust="spacingAndGlyphs" >Dashboard</text>
<rect x="440.00" y="1675.90" width="105.60" height="36.00" fill="#fdf07b" rx="6" />
<text x="454.70" y="1703.00" font-size="19.8" font-weight="normal" fill="#101820" textLength="77.86" lengthAdjust="spacingAndGlyphs" >Revenue</text>
<rect x="558.80" y="1675.90" width="78.90" height="36.00" fill="#fdf07b" rx="6" />
<text x="570.90" y="1703.00" font-size="19.8" font-weight="normal" fill="#101820" textLength="53.52" lengthAdjust="spacingAndGlyphs" >COGS</text>
<rect x="650.80" y="1675.90" width="76.00" height="36.00" fill="#fdf07b" rx="6" />
<text x="664.00" y="1703.00" font-size="19.8" font-weight="normal" fill="#101820" textLength="49.89" lengthAdjust="spacingAndGlyphs" >OPEX</text>
<rect x="740.00" y="1675.90" width="88.50" height="36.00" fill="#fdf07b" rx="6" />
<text x="753.50" y="1703.00" font-size="19.8" font-weight="normal" fill="#101820" textLength="61.12" lengthAdjust="spacingAndGlyphs" >Payroll</text>
<rect x="842.00" y="1675.90" width="86.60" height="36.00" fill="#fdf07b" rx="6" />
<text x="854.80" y="1703.00" font-size="19.8" font-weight="normal" fill="#101820" textLength="61.15" lengthAdjust="spacingAndGlyphs" >CAPEX</text>
<rect x="942.00" y="1675.90" width="112.60" height="36.00" fill="#fdf07b" rx="6" />
<text x="955.20" y="1703.00" font-size="19.8" font-weight="normal" fill="#101820" textLength="85.74" lengthAdjust="spacingAndGlyphs" >CapTable</text>
<rect x="1067.70" y="1675.90" width="90.30" height="36.00" fill="#fdf07b" rx="6" />
<text x="1081.20" y="1703.00" font-size="19.8" font-weight="normal" fill="#101820" textLength="63.18" lengthAdjust="spacingAndGlyphs" >Capital</text>
<rect x="1170.70" y="1675.90" width="42.00" height="36.00" fill="#4cb3e6" rx="6" />
<text x="1184.60" y="1703.00" font-size="19.8" font-weight="normal" fill="#101820" textLength="15.33" lengthAdjust="spacingAndGlyphs" >IS</text>
<rect x="1225.90" y="1675.90" width="47.80" height="36.00" fill="#4cb3e6" rx="6" />
<text x="1239.40" y="1703.00" font-size="19.8" font-weight="normal" fill="#101820" textLength="22.66" lengthAdjust="spacingAndGlyphs" >CF</text>
<rect x="1286.80" y="1675.90" width="47.90" height="36.00" fill="#4cb3e6" rx="6" />
<text x="1300.40" y="1703.00" font-size="19.8" font-weight="normal" fill="#101820" textLength="21.98" lengthAdjust="spacingAndGlyphs" >BS</text>
<rect x="1347.80" y="1675.90" width="114.70" height="36.00" fill="#4cb3e6" rx="6" />
<text x="1361.40" y="1703.00" font-size="19.8" font-weight="normal" fill="#101820" textLength="86.97" lengthAdjust="spacingAndGlyphs" >Scenarios</text>
<rect x="1476.00" y="1675.90" width="114.40" height="36.00" fill="#4cb3e6" rx="6" />
<text x="1489.20" y="1703.00" font-size="19.8" font-weight="normal" fill="#101820" textLength="86.78" lengthAdjust="spacingAndGlyphs" >Valuation</text>
<rect x="1603.90" y="1675.90" width="114.10" height="36.00" fill="#4cb3e6" rx="6" />
<text x="1618.00" y="1703.00" font-size="19.8" font-weight="normal" fill="#101820" textLength="85.75" lengthAdjust="spacingAndGlyphs" >Summary</text>
<rect x="1731.00" y="1675.90" width="48.20" height="36.00" fill="#4cb3e6" rx="6" />
<text x="1745.70" y="1703.00" font-size="19.8" font-weight="normal" fill="#101820" textLength="20.37" lengthAdjust="spacingAndGlyphs" >BE</text>
<rect x="1876.60" y="1675.90" width="84.90" height="36.00" fill="#4cb3e6" rx="6" />
<text x="1890.00" y="1703.00" font-size="19.8" font-weight="normal" fill="#101820" textLength="58.42" lengthAdjust="spacingAndGlyphs" >Charts</text>
<rect x="1974.60" y="1675.90" width="63.90" height="36.00" fill="#4cb3e6" rx="6" />
<text x="1987.50" y="1703.00" font-size="19.8" font-weight="normal" fill="#101820" textLength="37.96" lengthAdjust="spacingAndGlyphs" >KPIs</text>
<line x1="292.00" y1="1679.70" x2="292.00" y2="1707.80" stroke="#7a7a7a" stroke-width="1.3" />
<line x1="433.30" y1="1679.70" x2="433.30" y2="1707.80" stroke="#7a7a7a" stroke-width="1.3" />
<line x1="552.20" y1="1679.70" x2="552.20" y2="1707.80" stroke="#7a7a7a" stroke-width="1.3" />
<line x1="644.20" y1="1679.70" x2="644.20" y2="1707.80" stroke="#7a7a7a" stroke-width="1.3" />
<line x1="733.40" y1="1679.70" x2="733.40" y2="1707.80" stroke="#7a7a7a" stroke-width="1.3" />
<line x1="835.20" y1="1679.70" x2="835.20" y2="1707.80" stroke="#7a7a7a" stroke-width="1.3" />
<line x1="935.30" y1="1679.70" x2="935.30" y2="1707.80" stroke="#7a7a7a" stroke-width="1.3" />
<line x1="1061.10" y1="1679.70" x2="1061.10" y2="1707.80" stroke="#7a7a7a" stroke-width="1.3" />
<line x1="1164.30" y1="1679.70" x2="1164.30" y2="1707.80" stroke="#7a7a7a" stroke-width="1.3" />
<line x1="1219.30" y1="1679.70" x2="1219.30" y2="1707.80" stroke="#7a7a7a" stroke-width="1.3" />
<line x1="1280.20" y1="1679.70" x2="1280.20" y2="1707.80" stroke="#7a7a7a" stroke-width="1.3" />
<line x1="1341.20" y1="1679.70" x2="1341.20" y2="1707.80" stroke="#7a7a7a" stroke-width="1.3" />
<line x1="1469.20" y1="1679.70" x2="1469.20" y2="1707.80" stroke="#7a7a7a" stroke-width="1.3" />
<line x1="1597.10" y1="1679.70" x2="1597.10" y2="1707.80" stroke="#7a7a7a" stroke-width="1.3" />
<line x1="1724.40" y1="1679.70" x2="1724.40" y2="1707.80" stroke="#7a7a7a" stroke-width="1.3" />
<line x1="1785.40" y1="1679.70" x2="1785.40" y2="1707.80" stroke="#7a7a7a" stroke-width="1.3" />
<line x1="1870.30" y1="1679.70" x2="1870.30" y2="1707.80" stroke="#7a7a7a" stroke-width="1.3" />
<line x1="1968.00" y1="1679.70" x2="1968.00" y2="1707.80" stroke="#7a7a7a" stroke-width="1.3" />
<line x1="2045.30" y1="1679.70" x2="2045.30" y2="1707.80" stroke="#7a7a7a" stroke-width="1.3" />
<defs><clipPath id="stab"><rect x="2052" y="1670" width="19.7" height="48"/></clipPath></defs>
<g clip-path="url(#stab)">
<rect x="2052.00" y="1675.90" width="58.00" height="36.00" fill="#4cb3e6" rx="6" />
<text x="2065.50" y="1703.00" font-size="19.8" font-weight="normal" fill="#101820" textLength="85.25" lengthAdjust="spacingAndGlyphs" >Summary</text>
</g>
<defs><linearGradient id="act" x1="0" y1="0" x2="0" y2="1"><stop offset="0" stop-color="#ffffff"/><stop offset="1" stop-color="#cfe6f7"/></linearGradient></defs>
<path d="M1786 1670 Q1792 1670 1792 1676 L1792 1707 Q1792 1712 1797 1712 L1859 1712 Q1864 1712 1864 1707 L1864 1676 Q1864 1670 1870 1670 Z" fill="url(#act)"/>
<text x="1805.50" y="1697.80" font-size="20" font-weight="normal" fill="#101010" textLength="46.41" lengthAdjust="spacingAndGlyphs" >ROIC</text>
<rect x="1804.00" y="1705.30" width="48.00" height="2.60" fill="#1e8a4c" />
<circle cx="2088.5" cy="1692.7" r="2" fill="#e0e0e0"/>
<circle cx="2095" cy="1692.7" r="2" fill="#e0e0e0"/>
<circle cx="2101.5" cy="1692.7" r="2" fill="#e0e0e0"/>
<line x1="2135.00" y1="1692.70" x2="2151.00" y2="1692.70" stroke="#e0e0e0" stroke-width="1.6" />
<line x1="2143.00" y1="1684.70" x2="2143.00" y2="1700.70" stroke="#e0e0e0" stroke-width="1.6" />
<circle cx="2191.7" cy="1686.7" r="1.9" fill="#e0e0e0"/>
<circle cx="2191.7" cy="1692.7" r="1.9" fill="#e0e0e0"/>
<circle cx="2191.7" cy="1698.7" r="1.9" fill="#e0e0e0"/>
<rect x="2217.00" y="1679.60" width="641.50" height="26.20" fill="#161616" rx="13" />
<path d="M2234.5 1686 L2224.5 1692.7 L2234.5 1699.4 Z" stroke="none" fill="#9b9b9b" stroke-width="1" />
<rect x="2241.50" y="1686.70" width="552.50" height="12.00" fill="#9b9b9b" rx="6" />
<path d="M2842 1686 L2852 1692.7 L2842 1699.4 Z" stroke="none" fill="#9b9b9b" stroke-width="1" />
<rect x="11.00" y="1717.70" width="2879.20" height="32.60" fill="#151515" />
<line x1="11.00" y1="1718.40" x2="2890.20" y2="1718.40" stroke="#3a3a3a" stroke-width="1.2" />
<text x="27.40" y="1741.50" font-size="17.9" font-weight="normal" fill="#e0e0e0" textLength="42.03" lengthAdjust="spacingAndGlyphs" >Ready</text>
<g fill="none" stroke="#f0f0f0" stroke-width="2"><path d="M109 1745 L100 1745 L100 1727 L120 1727 L120 1734"/><path d="M100 1731 L120 1731 M103 1735 L108 1735 M103 1739 L106 1739"/><circle cx="113.7" cy="1738.7" r="5.6"/></g>
<circle cx="113.7" cy="1738.7" r="2.8" fill="#f0f0f0"/>
<g fill="none" stroke="#f0f0f0" stroke-width="1.9" stroke-linecap="round" stroke-linejoin="round"><circle cx="156.5" cy="1727.8" r="2.4"/><path d="M148 1731.5 Q152 1735 156.5 1734 Q161 1735 164.5 1731.5"/><path d="M156.5 1734 L155.5 1740 L150.5 1745.5 M155.5 1740 L158 1742"/><path d="M159.5 1738.5 L167 1746 M167 1738.5 L159.5 1746"/></g>
<text x="173.50" y="1741.50" font-size="17.9" font-weight="bold" fill="#f0f0f0" textLength="187.39" lengthAdjust="spacingAndGlyphs" >Accessibility: Investigate</text>
<rect x="2445.00" y="1718.50" width="60.00" height="31.50" fill="#2a2a2a" />
<rect x="2465" y="1725" width="18.199999999999818" height="18" fill="none" stroke="#f0f0f0" stroke-width="2.3"/>
<line x1="2471.07" y1="1725.00" x2="2471.07" y2="1743.00" stroke="#f0f0f0" stroke-width="2.3" />
<line x1="2477.13" y1="1725.00" x2="2477.13" y2="1743.00" stroke="#f0f0f0" stroke-width="2.3" />
<line x1="2465.00" y1="1731.00" x2="2483.20" y2="1731.00" stroke="#f0f0f0" stroke-width="2.3" />
<line x1="2465.00" y1="1737.00" x2="2483.20" y2="1737.00" stroke="#f0f0f0" stroke-width="2.3" />
<g fill="none" stroke="#d8d8d8" stroke-width="1.5"><rect x="2524.5" y="1725.5" width="21.5" height="18.5"/><rect x="2529" y="1729" width="12.5" height="11.5"/><path d="M2531.5 1732 L2539 1732 M2531.5 1734.8 L2539 1734.8 M2531.5 1737.6 L2539 1737.6"/></g>
<g fill="none" stroke="#d8d8d8" stroke-width="1.5"><rect x="2584.5" y="1725.5" width="21.5" height="18.5"/><path d="M2590 1725.5 L2590 1735 L2596 1735 L2596 1725.5 M2600.5 1725.5 L2600.5 1735"/></g>
<line x1="2632.70" y1="1734.60" x2="2645.00" y2="1734.60" stroke="#d8d8d8" stroke-width="1.5" />
<line x1="2652.70" y1="1734.60" x2="2800.00" y2="1734.60" stroke="#a0a0a0" stroke-width="2" />
<rect x="2726.80" y="1726.80" width="8.20" height="16.20" fill="#b0b0b0" rx="1.5" />
<line x1="2808.00" y1="1734.60" x2="2821.00" y2="1734.60" stroke="#d8d8d8" stroke-width="1.5" />
<line x1="2814.50" y1="1728.00" x2="2814.50" y2="1741.20" stroke="#d8d8d8" stroke-width="1.5" />
<text x="2839.00" y="1741.50" font-size="17.9" font-weight="normal" fill="#e0e0e0" textLength="40.03" lengthAdjust="spacingAndGlyphs" >120%</text>
</svg>
</body></html>
